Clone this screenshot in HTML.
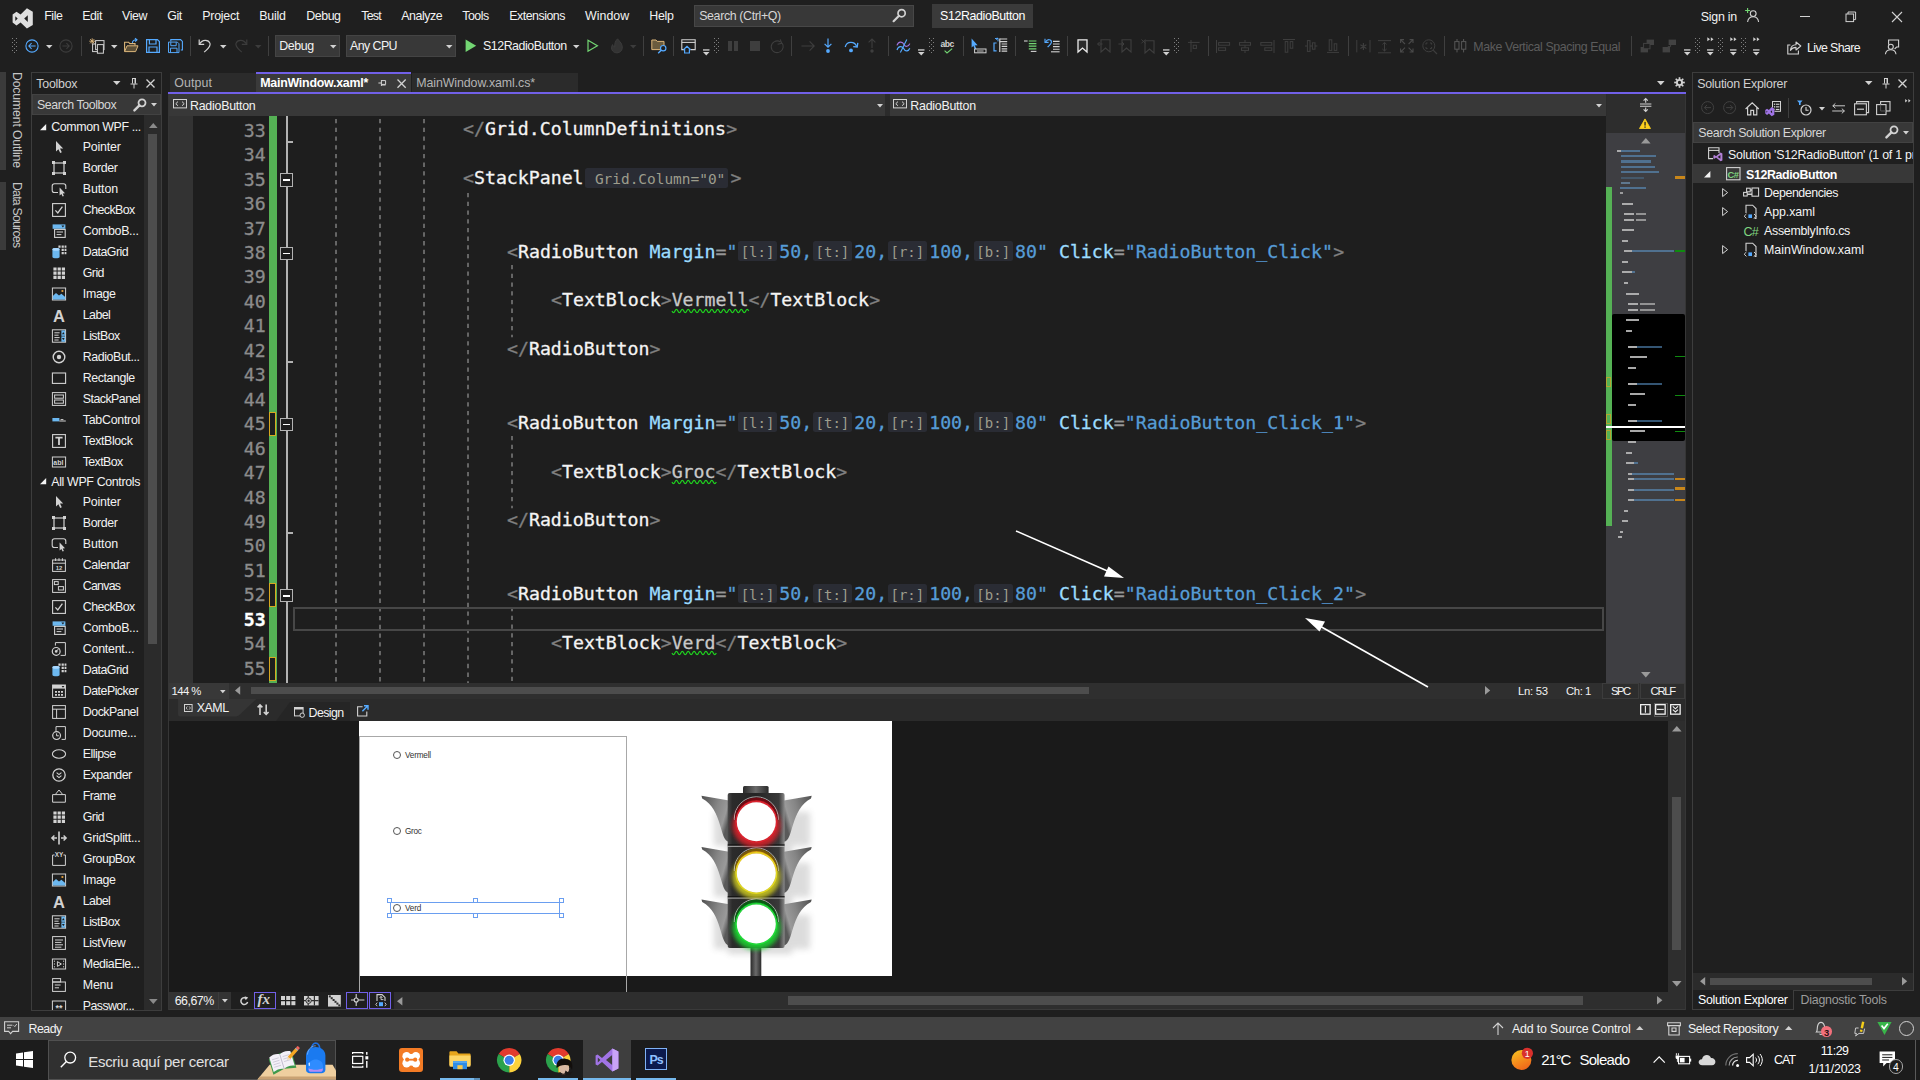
<!DOCTYPE html>
<html><head><meta charset="utf-8"><title>S12RadioButton - Microsoft Visual Studio</title>
<style>
html,body{margin:0;padding:0;background:#1f1f1f;}
body{width:1920px;height:1080px;position:relative;overflow:hidden;font-family:"Liberation Sans",sans-serif;}
.t{position:absolute;white-space:pre;}
.r{position:absolute;box-sizing:border-box;}
svg.r{overflow:visible;}
.c{font-family:"DejaVu Sans Mono","Liberation Mono",monospace;font-size:18.22px;line-height:24.45px;-webkit-text-stroke:0.3px currentColor}
</style></head><body>
<!-- part_top -->
<div class="r" style="left:0px;top:0px;width:1920px;height:66px;background:#1f1f1f;"></div>
<svg class="r" style="left:11.5px;top:7.5px;" width="22" height="21" viewBox="0 0 22 21"><path d="M14.9 0.2 L20.8 3.8 V17.1 L14.9 20.6 L8.6 14.6 L4.5 17.5 L0.6 14.6 V6.5 L4.5 3.7 L8.6 6.6 Z M15.8 7.2 V13.9 L12.2 10.6 Z M3.3 8.2 V12.9 L5.7 10.6 Z" fill="#dedede" fill-rule="evenodd"/></svg>
<span class="t" style="left:44.2px;top:8px;font-size:12.4px;line-height:17px;color:#f2f2f2;letter-spacing:-0.417px;">File</span>
<span class="t" style="left:82.2px;top:8px;font-size:12.4px;line-height:17px;color:#f2f2f2;letter-spacing:-0.390px;">Edit</span>
<span class="t" style="left:122px;top:8px;font-size:12.4px;line-height:17px;color:#f2f2f2;letter-spacing:-0.410px;">View</span>
<span class="t" style="left:167.2px;top:8px;font-size:12.4px;line-height:17px;color:#f2f2f2;letter-spacing:-0.448px;">Git</span>
<span class="t" style="left:202.2px;top:8px;font-size:12.4px;line-height:17px;color:#f2f2f2;letter-spacing:-0.225px;">Project</span>
<span class="t" style="left:259.2px;top:8px;font-size:12.4px;line-height:17px;color:#f2f2f2;letter-spacing:-0.192px;">Build</span>
<span class="t" style="left:306.3px;top:8px;font-size:12.4px;line-height:17px;color:#f2f2f2;letter-spacing:-0.463px;">Debug</span>
<span class="t" style="left:361.3px;top:8px;font-size:12.4px;line-height:17px;color:#f2f2f2;letter-spacing:-0.809px;">Test</span>
<span class="t" style="left:401.2px;top:8px;font-size:12.4px;line-height:17px;color:#f2f2f2;letter-spacing:-0.442px;">Analyze</span>
<span class="t" style="left:462.2px;top:8px;font-size:12.4px;line-height:17px;color:#f2f2f2;letter-spacing:-0.467px;">Tools</span>
<span class="t" style="left:509.2px;top:8px;font-size:12.4px;line-height:17px;color:#f2f2f2;letter-spacing:-0.482px;">Extensions</span>
<span class="t" style="left:585px;top:8px;font-size:12.4px;line-height:17px;color:#f2f2f2;letter-spacing:0.020px;">Window</span>
<span class="t" style="left:649.2px;top:8px;font-size:12.4px;line-height:17px;color:#f2f2f2;letter-spacing:-0.221px;">Help</span>
<div class="r" style="left:694px;top:5px;width:220px;height:22px;background:#383838;border:1px solid #474747;box-sizing:border-box;"></div>
<span class="t" style="left:699.2px;top:8px;font-size:12.4px;line-height:17px;color:#d6d6d6;letter-spacing:-0.367px;">Search (Ctrl+Q)</span>
<svg class="r" style="left:892px;top:8px;" width="15" height="15" viewBox="0 0 15 15"><circle cx="9.6" cy="5.2" r="3.6" fill="none" stroke="#d2d2d2" stroke-width="1.7"/><path d="M7 7.8 L1.6 13.2" stroke="#d2d2d2" stroke-width="2.2" stroke-linecap="round"/></svg>
<div class="r" style="left:932px;top:4px;width:101px;height:24px;background:#3a3a3a;"></div>
<span class="t" style="left:940px;top:8px;font-size:12.4px;line-height:17px;color:#ffffff;letter-spacing:-0.375px;">S12RadioButton</span>
<span class="t" style="left:1700.8px;top:8.8px;font-size:12.4px;line-height:17px;color:#f2f2f2;letter-spacing:-0.242px;">Sign in</span>
<svg class="r" style="left:1744px;top:7px;" width="16" height="16" viewBox="0 0 16 16"><path d="M3.6 1 V6 M1.1 3.5 H6.1" stroke="#73d673" stroke-width="1.1"/><circle cx="9.2" cy="6.6" r="2.9" fill="none" stroke="#d2d2d2" stroke-width="1.1"/><path d="M3.6 15 C4 11.2 6.5 9.8 9.2 9.8 C11.9 9.8 14.2 11.2 14.6 15" fill="none" stroke="#d2d2d2" stroke-width="1.1"/></svg>
<div class="r" style="left:1800px;top:16px;width:10px;height:1px;background:#d2d2d2;"></div>
<svg class="r" style="left:1845px;top:11px;" width="12" height="12" viewBox="0 0 12 12"><rect x="1" y="3" width="7.6" height="7.6" fill="none" stroke="#d2d2d2" stroke-width="1"/><path d="M3 3 V1 H10.6 V8.6 H8.6" fill="none" stroke="#d2d2d2" stroke-width="1"/></svg>
<svg class="r" style="left:1892px;top:12px;" width="10" height="10" viewBox="0 0 10 10"><path d="M0 0 L10 10 M10 0 L0 10" stroke="#d2d2d2" stroke-width="1.1"/></svg>
<svg class="r" style="left:12px;top:38px;shape-rendering:crispEdges;" width="6" height="16" viewBox="0 0 6 16"><rect x="0" y="0" width="1" height="1" fill="#808080"/><rect x="4" y="0" width="1" height="1" fill="#808080"/><rect x="2" y="2" width="1" height="1" fill="#808080"/><rect x="0" y="4" width="1" height="1" fill="#808080"/><rect x="4" y="4" width="1" height="1" fill="#808080"/><rect x="2" y="6" width="1" height="1" fill="#808080"/><rect x="0" y="8" width="1" height="1" fill="#808080"/><rect x="4" y="8" width="1" height="1" fill="#808080"/><rect x="2" y="10" width="1" height="1" fill="#808080"/><rect x="0" y="12" width="1" height="1" fill="#808080"/><rect x="4" y="12" width="1" height="1" fill="#808080"/><rect x="2" y="14" width="1" height="1" fill="#808080"/></svg>
<svg class="r" style="left:24.5px;top:39px;" width="14" height="14" viewBox="0 0 14 14"><circle cx="7" cy="7" r="6.1" fill="none" stroke="#55aaff" stroke-width="1.1"/><path d="M10.6 7 H3.8 M6.6 4.2 L3.8 7 L6.6 9.8" fill="none" stroke="#55aaff" stroke-width="1.05"/></svg>
<svg class="r" style="left:45.95px;top:45.05px;" width="6.5" height="3.5" viewBox="0 0 6.5 3.5"><polygon points="0,0 6.5,0 3.25,3.5" fill="#d2d2d2"/></svg>
<svg class="r" style="left:58.5px;top:39px;" width="14" height="14" viewBox="0 0 14 14"><circle cx="7" cy="7" r="6.1" fill="none" stroke="#3c3c3c" stroke-width="1.1"/><path d="M3.4 7 H10.2 M7.4 4.2 L10.2 7 L7.4 9.8" fill="none" stroke="#3c3c3c" stroke-width="1.05"/></svg>
<div class="r" style="left:80.5px;top:36px;width:1px;height:20px;background:#3f3f3f;"></div>
<svg class="r" style="left:89px;top:38px;" width="17" height="16" viewBox="0 0 17 16"><path d="M3.2 0.3 V6.2 M0.3 3.2 H6.2 M1.1 1.1 L5.3 5.3 M5.3 1.1 L1.1 5.3" stroke="#dcb67a" stroke-width="0.9"/><rect x="3.6" y="6" width="6.6" height="7.6" fill="none" stroke="#d2d2d2" stroke-width="1"/><rect x="6.6" y="2.6" width="8.4" height="9" fill="#1f1f1f" stroke="#d2d2d2" stroke-width="1"/><rect x="8.4" y="6.6" width="6" height="8.6" fill="#1f1f1f" stroke="#d2d2d2" stroke-width="1"/></svg>
<svg class="r" style="left:110.55px;top:45.05px;" width="6.5" height="3.5" viewBox="0 0 6.5 3.5"><polygon points="0,0 6.5,0 3.25,3.5" fill="#d2d2d2"/></svg>
<svg class="r" style="left:123.5px;top:38px;" width="16" height="15" viewBox="0 0 16 15"><path d="M0.6 13.6 V4.2 H4.6 L5.8 5.6 H11 V7.6" fill="none" stroke="#dcb67a" stroke-width="1.1"/><path d="M0.6 13.6 L3 7.8 H14 L11.6 13.6 Z" fill="#5b4e36" stroke="#dcb67a" stroke-width="1"/><path d="M8.4 5 C8.6 2.6 10.4 1.6 12.8 1.8 M11 0.2 L13 1.8 L11.2 3.6" fill="none" stroke="#55aaff" stroke-width="1.1"/></svg>
<svg class="r" style="left:146.3px;top:39px;" width="14" height="14" viewBox="0 0 14 14"><path d="M0.6 0.6 H11.4 L13.4 2.6 V13.4 H0.6 Z" fill="none" stroke="#55aaff" stroke-width="1.2"/><path d="M3.4 0.8 V5 H10 V0.8" fill="none" stroke="#55aaff" stroke-width="1.2"/><path d="M3 13.2 V8 H11 V13.2" fill="none" stroke="#55aaff" stroke-width="1.2"/></svg>
<svg class="r" style="left:167.5px;top:39px;" width="15" height="14" viewBox="0 0 15 14"><path d="M2.8 2.4 V0.6 H12.6 L14.4 2.4 V11 H12.8" fill="none" stroke="#55aaff" stroke-width="1.1"/><g transform="translate(0,2.6) scale(0.82)"><path d="M0.6 0.6 H11.4 L13.4 2.6 V13.4 H0.6 Z" fill="none" stroke="#55aaff" stroke-width="1.2"/><path d="M3.4 0.8 V5 H10 V0.8" fill="none" stroke="#55aaff" stroke-width="1.2"/><path d="M3 13.2 V8 H11 V13.2" fill="none" stroke="#55aaff" stroke-width="1.2"/></g></svg>
<div class="r" style="left:189.5px;top:36px;width:1px;height:20px;background:#3f3f3f;"></div>
<svg class="r" style="left:198px;top:38px;" width="14" height="15" viewBox="0 0 14 15"><path d="M1.2 1.4 V6.4 H6.2" fill="none" stroke="#d2d2d2" stroke-width="1.2"/><path d="M1.6 6 C4.2 1.4 10.4 1.2 12 5.4 C13 8.6 9.6 10.8 6.2 14.2" fill="none" stroke="#d2d2d2" stroke-width="1.2"/></svg>
<svg class="r" style="left:219.75px;top:45.05px;" width="6.5" height="3.5" viewBox="0 0 6.5 3.5"><polygon points="0,0 6.5,0 3.25,3.5" fill="#d2d2d2"/></svg>
<svg class="r" style="left:233.5px;top:38px;" width="14" height="15" viewBox="0 0 14 15"><path d="M12.8 1.4 V6.4 H7.8" fill="none" stroke="#3c3c3c" stroke-width="1.2"/><path d="M12.4 6 C9.8 1.4 3.6 1.2 2 5.4 C1 8.6 4.4 10.8 7.8 14.2" fill="none" stroke="#3c3c3c" stroke-width="1.2"/></svg>
<svg class="r" style="left:254.55px;top:45.05px;" width="6.5" height="3.5" viewBox="0 0 6.5 3.5"><polygon points="0,0 6.5,0 3.25,3.5" fill="#3c3c3c"/></svg>
<div class="r" style="left:267.5px;top:36px;width:1px;height:20px;background:#3f3f3f;"></div>
<div class="r" style="left:275px;top:35px;width:65px;height:22px;background:#383838;border:1px solid #444444;box-sizing:border-box;"></div>
<span class="t" style="left:279.2px;top:38px;font-size:12.4px;line-height:17px;color:#f2f2f2;letter-spacing:-0.403px;">Debug</span>
<svg class="r" style="left:329.75px;top:45.15px;" width="6.5" height="3.5" viewBox="0 0 6.5 3.5"><polygon points="0,0 6.5,0 3.25,3.5" fill="#d2d2d2"/></svg>
<div class="r" style="left:346px;top:35px;width:110px;height:22px;background:#383838;border:1px solid #444444;box-sizing:border-box;"></div>
<span class="t" style="left:350px;top:38px;font-size:12.4px;line-height:17px;color:#f2f2f2;letter-spacing:-0.567px;">Any CPU</span>
<svg class="r" style="left:445.55px;top:45.15px;" width="6.5" height="3.5" viewBox="0 0 6.5 3.5"><polygon points="0,0 6.5,0 3.25,3.5" fill="#d2d2d2"/></svg>
<svg class="r" style="left:465px;top:39px;" width="12" height="14" viewBox="0 0 12 14"><polygon points="0.6,0.4 11.2,6.7 0.6,13" fill="#73d673"/></svg>
<span class="t" style="left:483px;top:38px;font-size:12.4px;line-height:17px;color:#f2f2f2;letter-spacing:-0.468px;">S12RadioButton</span>
<svg class="r" style="left:572.75px;top:45.15px;" width="6.5" height="3.5" viewBox="0 0 6.5 3.5"><polygon points="0,0 6.5,0 3.25,3.5" fill="#d2d2d2"/></svg>
<svg class="r" style="left:587px;top:39px;" width="12" height="14" viewBox="0 0 12 14"><polygon points="1,1.2 10.4,6.7 1,12.2" fill="none" stroke="#73d673" stroke-width="1.2"/></svg>
<svg class="r" style="left:610px;top:38px;" width="14" height="16" viewBox="0 0 14 16"><path d="M7.6 0.8 C9.6 3.6 12.8 6 12.2 10.4 C11.6 14.2 7.6 15.6 4.6 14.4 C1.4 13 0.8 9.4 2.6 6.6 C3 8.2 3.8 8.8 4.8 9 C4.4 5.6 5.4 2.8 7.6 0.8 Z" fill="#333" stroke="#3c3c3c" stroke-width="1"/></svg>
<svg class="r" style="left:629.55px;top:45.15px;" width="6.5" height="3.5" viewBox="0 0 6.5 3.5"><polygon points="0,0 6.5,0 3.25,3.5" fill="#3c3c3c"/></svg>
<div class="r" style="left:642.5px;top:36px;width:1px;height:20px;background:#3f3f3f;"></div>
<svg class="r" style="left:650.5px;top:39px;" width="17" height="15" viewBox="0 0 17 15"><path d="M0.8 10.6 V1 H5 L6.2 2.4 H13 V10.6 Z" fill="#6b5c3e" stroke="#dcb67a" stroke-width="1"/><circle cx="12.2" cy="9.2" r="2.7" fill="#1f1f1f" stroke="#55aaff" stroke-width="1.2"/><path d="M10.2 11.2 L7.2 14.2" stroke="#55aaff" stroke-width="1.4"/></svg>
<div class="r" style="left:672.5px;top:36px;width:1px;height:20px;background:#3f3f3f;"></div>
<svg class="r" style="left:680.5px;top:39px;" width="16" height="15" viewBox="0 0 16 15"><path d="M3 10.6 H0.8 V0.8 H14.2 V10.6 H9.4" fill="none" stroke="#d2d2d2" stroke-width="1.1"/><path d="M0.8 3.4 H14.2" stroke="#d2d2d2" stroke-width="1.1"/><path d="M2.4 10.8 L6 7.4 L9.6 10.8 M3.6 10 V14 H8.4 V10" fill="none" stroke="#55aaff" stroke-width="1.2"/></svg>
<svg class="r" style="left:702.8px;top:48.5px;" width="6.5" height="7" viewBox="0 0 6.5 7"><rect x="0" y="0.3" width="6.5" height="1.3" fill="#d2d2d2"/><polygon points="0,3 6.5,3 3.25,6.5" fill="#d2d2d2"/></svg>
<svg class="r" style="left:714px;top:38px;shape-rendering:crispEdges;" width="6" height="16" viewBox="0 0 6 16"><rect x="0" y="0" width="1" height="1" fill="#808080"/><rect x="4" y="0" width="1" height="1" fill="#808080"/><rect x="2" y="2" width="1" height="1" fill="#808080"/><rect x="0" y="4" width="1" height="1" fill="#808080"/><rect x="4" y="4" width="1" height="1" fill="#808080"/><rect x="2" y="6" width="1" height="1" fill="#808080"/><rect x="0" y="8" width="1" height="1" fill="#808080"/><rect x="4" y="8" width="1" height="1" fill="#808080"/><rect x="2" y="10" width="1" height="1" fill="#808080"/><rect x="0" y="12" width="1" height="1" fill="#808080"/><rect x="4" y="12" width="1" height="1" fill="#808080"/><rect x="2" y="14" width="1" height="1" fill="#808080"/></svg>
<div class="r" style="left:728px;top:41px;width:3.6px;height:10px;background:#3e3e3e;"></div>
<div class="r" style="left:734.4px;top:41px;width:3.6px;height:10px;background:#3e3e3e;"></div>
<div class="r" style="left:750px;top:41px;width:10px;height:10px;background:#3e3e3e;"></div>
<svg class="r" style="left:770px;top:38.5px;" width="15" height="15" viewBox="0 0 15 15"><path d="M10.6 3 C6.6 0.4 1.4 3 1.2 7.8 C1.2 12.6 6.4 15 10.4 12.6 C13.6 10.4 13.8 6.6 12.2 4.2" fill="none" stroke="#3e3e3e" stroke-width="1.1"/><path d="M10.2 0.4 L11.8 4.4 L7.6 5.2" fill="none" stroke="#3e3e3e" stroke-width="1.1"/></svg>
<div class="r" style="left:791.3px;top:36px;width:1px;height:20px;background:#3f3f3f;"></div>
<svg class="r" style="left:800.5px;top:40px;" width="14" height="12" viewBox="0 0 14 12"><path d="M0.4 6 H13 M8.6 1.4 L13.2 6 L8.6 10.6" fill="none" stroke="#3e3e3e" stroke-width="1.1"/></svg>
<svg class="r" style="left:823px;top:37.5px;" width="10" height="16" viewBox="0 0 10 16"><path d="M5 0.6 V9 M1.6 5.8 L5 9.2 L8.4 5.8" fill="none" stroke="#55aaff" stroke-width="1.2"/><circle cx="5" cy="13" r="1.9" fill="#55aaff"/></svg>
<svg class="r" style="left:843.5px;top:39px;" width="15" height="14" viewBox="0 0 15 14"><path d="M1.2 8 C2.8 2 10.6 2 12.6 7.4" fill="none" stroke="#55aaff" stroke-width="1.3"/><path d="M9.2 7.6 L13.2 8 L13.8 3.8" fill="none" stroke="#55aaff" stroke-width="1.3"/><circle cx="7" cy="11.4" r="1.9" fill="#55aaff"/></svg>
<svg class="r" style="left:867px;top:37.5px;" width="10" height="16" viewBox="0 0 10 16"><path d="M5 10 V1 M1.6 4.4 L5 1 L8.4 4.4" fill="none" stroke="#3e3e3e" stroke-width="1.1"/><circle cx="5" cy="13" r="1.7" fill="#3e3e3e"/></svg>
<div class="r" style="left:887.5px;top:36px;width:1px;height:20px;background:#3f3f3f;"></div>
<svg class="r" style="left:895.5px;top:39px;" width="15" height="14" viewBox="0 0 15 14"><path d="M1 6.4 C2.4 2.2 6.4 2 8 5.4 C9.4 8.4 12.6 7.6 13.8 4.6" fill="none" stroke="#a074e0" stroke-width="1.2"/><path d="M1 11 C2.4 6.8 6.4 6.6 8 10 C9.4 13 12.6 12.2 13.8 9.2" fill="none" stroke="#55aaff" stroke-width="1.2"/><path d="M4.4 13.6 L10.8 0.6" stroke="#55aaff" stroke-width="1.1"/></svg>
<svg class="r" style="left:918px;top:48.5px;" width="6.5" height="7" viewBox="0 0 6.5 7"><rect x="0" y="0.3" width="6.5" height="1.3" fill="#d2d2d2"/><polygon points="0,3 6.5,3 3.25,6.5" fill="#d2d2d2"/></svg>
<svg class="r" style="left:929px;top:38px;shape-rendering:crispEdges;" width="6" height="16" viewBox="0 0 6 16"><rect x="0" y="0" width="1" height="1" fill="#808080"/><rect x="4" y="0" width="1" height="1" fill="#808080"/><rect x="2" y="2" width="1" height="1" fill="#808080"/><rect x="0" y="4" width="1" height="1" fill="#808080"/><rect x="4" y="4" width="1" height="1" fill="#808080"/><rect x="2" y="6" width="1" height="1" fill="#808080"/><rect x="0" y="8" width="1" height="1" fill="#808080"/><rect x="4" y="8" width="1" height="1" fill="#808080"/><rect x="2" y="10" width="1" height="1" fill="#808080"/><rect x="0" y="12" width="1" height="1" fill="#808080"/><rect x="4" y="12" width="1" height="1" fill="#808080"/><rect x="2" y="14" width="1" height="1" fill="#808080"/></svg>
<span class="t" style="left:940.4px;top:38.1px;font-size:8.6px;line-height:12px;color:#d2d2d2;font-weight:700;letter-spacing:-0.404px;">abc</span>
<svg class="r" style="left:944px;top:47.5px;" width="9" height="6" viewBox="0 0 9 6"><path d="M0.6 2.6 L3 5 L8.2 0.6" fill="none" stroke="#73d673" stroke-width="1.1"/></svg>
<div class="r" style="left:962.5px;top:36px;width:1px;height:20px;background:#3f3f3f;"></div>
<svg class="r" style="left:970.5px;top:38px;" width="16" height="16" viewBox="0 0 16 16"><polygon points="0.6,0.4 0.6,9.4 2.8,7.4 6.6,7.2" fill="#55aaff"/><path d="M2.8 7 L4.6 11" stroke="#55aaff" stroke-width="1.6"/><rect x="3.6" y="11" width="11.4" height="3.8" fill="none" stroke="#d2d2d2" stroke-width="1"/><path d="M6 13 H12.6" stroke="#d2d2d2" stroke-width="0.9"/></svg>
<svg class="r" style="left:992.5px;top:38px;" width="16" height="16" viewBox="0 0 16 16"><path d="M3.6 5 H1 V12.8 H3.6" fill="none" stroke="#55aaff" stroke-width="1.2"/><path d="M3 1.6 L5 0.2 M5 0.2 L5 3.4 M5 0.2 L2 0.6" stroke="#55aaff" stroke-width="1"/><path d="M6.8 1 H14.2 M6.8 3.6 H14.2 M8.6 6 H14.2 M8.6 8.4 H14.2 M8.6 10.8 H14.2 M8.6 13.2 H14.2" stroke="#d2d2d2" stroke-width="1.2"/><path d="M6.8 0.6 V14" stroke="#d2d2d2" stroke-width="1.2"/></svg>
<div class="r" style="left:1014.5px;top:36px;width:1px;height:20px;background:#3f3f3f;"></div>
<svg class="r" style="left:1024px;top:40px;" width="13" height="12" viewBox="0 0 13 12"><path d="M0 1 H3.6" stroke="#d2d2d2" stroke-width="1.1"/><path d="M4.8 1 H12.4 M4.8 3.6 H12.4 M4.8 6.2 H12.4 M4.8 8.8 H12.4" stroke="#73d673" stroke-width="1.2"/><path d="M6.8 11.4 H12.4" stroke="#d2d2d2" stroke-width="1.1"/></svg>
<svg class="r" style="left:1043.5px;top:38px;" width="17" height="15" viewBox="0 0 17 15"><path d="M1 0.8 V4.4 H4.6" fill="none" stroke="#55aaff" stroke-width="1.1"/><path d="M1.6 4 C3.4 0.6 7.8 1.2 7.4 4.4 C7 6.4 5 7.6 3.6 9.2" fill="none" stroke="#55aaff" stroke-width="1.2"/><path d="M9 3.4 H15.6 M9 6 H15.6 M9 8.6 H15.6 M9 11.2 H15.6" stroke="#d2d2d2" stroke-width="1.1"/><path d="M7 13.8 H15.6" stroke="#d2d2d2" stroke-width="1.1"/></svg>
<div class="r" style="left:1066.5px;top:36px;width:1px;height:20px;background:#3f3f3f;"></div>
<svg class="r" style="left:1076.5px;top:39px;" width="11" height="14" viewBox="0 0 11 14"><path d="M1 0.8 H10 V13 L5.5 9 L1 13 Z" fill="#2a2a2a" stroke="#ebebeb" stroke-width="1.3"/></svg>
<svg class="r" style="left:1097px;top:39px;" width="14" height="14" viewBox="0 0 14 14"><g transform="translate(3,0)"><path d="M1 0.8 H10 V13 L5.5 9 L1 13 Z" fill="none" stroke="#3e3e3e" stroke-width="1.1"/></g><path d="M5.6 5 H0.6 M2.6 3 L0.6 5 L2.6 7" fill="none" stroke="#3e3e3e" stroke-width="1"/></svg>
<svg class="r" style="left:1118px;top:39px;" width="14" height="14" viewBox="0 0 14 14"><g transform="translate(3,0)"><path d="M1 0.8 H10 V13 L5.5 9 L1 13 Z" fill="none" stroke="#3e3e3e" stroke-width="1.1"/></g><path d="M0.4 5 H6 M4 3 L6 5 L4 7" fill="none" stroke="#3e3e3e" stroke-width="1"/></svg>
<svg class="r" style="left:1140.5px;top:38.5px;" width="14" height="15" viewBox="0 0 14 15"><g transform="translate(3,1)"><path d="M1 0.8 H10 V13 L5.5 9 L1 13 Z" fill="none" stroke="#3e3e3e" stroke-width="1.1"/></g><path d="M0.4 0.4 L4.4 4.4 M4.4 0.4 L0.4 4.4" stroke="#3e3e3e" stroke-width="0.9"/></svg>
<svg class="r" style="left:1162.8px;top:48.5px;" width="6.5" height="7" viewBox="0 0 6.5 7"><rect x="0" y="0.3" width="6.5" height="1.3" fill="#d2d2d2"/><polygon points="0,3 6.5,3 3.25,6.5" fill="#d2d2d2"/></svg>
<svg class="r" style="left:1174px;top:38px;shape-rendering:crispEdges;" width="6" height="16" viewBox="0 0 6 16"><rect x="0" y="0" width="1" height="1" fill="#808080"/><rect x="4" y="0" width="1" height="1" fill="#808080"/><rect x="2" y="2" width="1" height="1" fill="#808080"/><rect x="0" y="4" width="1" height="1" fill="#808080"/><rect x="4" y="4" width="1" height="1" fill="#808080"/><rect x="2" y="6" width="1" height="1" fill="#808080"/><rect x="0" y="8" width="1" height="1" fill="#808080"/><rect x="4" y="8" width="1" height="1" fill="#808080"/><rect x="2" y="10" width="1" height="1" fill="#808080"/><rect x="0" y="12" width="1" height="1" fill="#808080"/><rect x="4" y="12" width="1" height="1" fill="#808080"/><rect x="2" y="14" width="1" height="1" fill="#808080"/></svg>
<svg class="r" style="left:1187.5px;top:39.5px;" width="12" height="13" viewBox="0 0 12 13"><path d="M0 2.4 H11.6 M3 0 V12" stroke="#3e3e3e" stroke-width="1"/><rect x="5.2" y="5.2" width="3.2" height="3.2" fill="none" stroke="#3e3e3e" stroke-width="1"/></svg>
<div class="r" style="left:1207.5px;top:36px;width:1px;height:20px;background:#3f3f3f;"></div>
<svg class="r" style="left:1216px;top:39.5px;" width="15" height="13" viewBox="0 0 15 13"><path d="M0.5 0 V13" stroke="#3e3e3e" stroke-width="1"/><rect x="2.6" y="2.6" width="11" height="2.6" fill="none" stroke="#3e3e3e"/><rect x="2.6" y="7.8" width="7" height="2.6" fill="none" stroke="#3e3e3e"/></svg>
<svg class="r" style="left:1238.5px;top:39.5px;" width="12" height="13" viewBox="0 0 12 13"><path d="M6 0 V13" stroke="#3e3e3e" stroke-width="1"/><rect x="0.5" y="2.6" width="11" height="2.6" fill="#1f1f1f" stroke="#3e3e3e"/><rect x="2.5" y="7.8" width="7" height="2.6" fill="#1f1f1f" stroke="#3e3e3e"/></svg>
<svg class="r" style="left:1260px;top:39.5px;" width="15" height="13" viewBox="0 0 15 13"><path d="M14 0 V13" stroke="#3e3e3e" stroke-width="1"/><rect x="0.8" y="2.6" width="11" height="2.6" fill="none" stroke="#3e3e3e"/><rect x="4.8" y="7.8" width="7" height="2.6" fill="none" stroke="#3e3e3e"/></svg>
<svg class="r" style="left:1283px;top:39px;" width="13" height="14" viewBox="0 0 13 14"><path d="M0 0.5 H12" stroke="#3e3e3e"/><rect x="2.2" y="2.6" width="2.6" height="10.6" fill="none" stroke="#3e3e3e"/><rect x="7.2" y="2.6" width="2.6" height="6.6" fill="none" stroke="#3e3e3e"/></svg>
<svg class="r" style="left:1305px;top:39px;" width="13" height="14" viewBox="0 0 13 14"><path d="M0 7 H12.4" stroke="#3e3e3e"/><rect x="2.4" y="1.6" width="2.6" height="10.8" fill="#1f1f1f" stroke="#3e3e3e"/><rect x="7.4" y="3.8" width="2.6" height="6.4" fill="#1f1f1f" stroke="#3e3e3e"/></svg>
<svg class="r" style="left:1327px;top:39px;" width="13" height="14" viewBox="0 0 13 14"><path d="M0 13.4 H12" stroke="#3e3e3e"/><rect x="2.2" y="0.8" width="2.6" height="10.6" fill="none" stroke="#3e3e3e"/><rect x="7.2" y="4.8" width="2.6" height="6.6" fill="none" stroke="#3e3e3e"/></svg>
<div class="r" style="left:1347.5px;top:36px;width:1px;height:20px;background:#3f3f3f;"></div>
<svg class="r" style="left:1355.5px;top:39.5px;" width="15" height="13" viewBox="0 0 15 13"><path d="M0.8 0 V12.4 M14 0 V12.4" stroke="#3e3e3e"/><path d="M7.4 3 V10 M4.4 4.8 L10.4 8.4 M10.4 4.8 L4.4 8.4" stroke="#3e3e3e" stroke-width="1.2"/></svg>
<svg class="r" style="left:1378px;top:39.5px;" width="14" height="14" viewBox="0 0 14 14"><path d="M0 0.6 H13 M0 12.8 H13" stroke="#3e3e3e"/><path d="M6.5 2.4 V11 M4.4 4.4 L6.5 2.4 L8.6 4.4 M4.4 9 L6.5 11 L8.6 9" fill="none" stroke="#3e3e3e"/></svg>
<svg class="r" style="left:1400px;top:39px;" width="14" height="14" viewBox="0 0 14 14"><path d="M0.6 4 V0.6 H4 M9.6 0.6 H13 V4 M13 9.6 V13 H9.6 M4 13 H0.6 V9.6 M0.8 0.8 L5 5 M12.8 0.8 L8.6 5 M12.8 12.8 L8.6 8.6 M0.8 12.8 L5 8.6" fill="none" stroke="#4a4a4a" stroke-width="1.1"/></svg>
<svg class="r" style="left:1421.5px;top:39px;" width="16" height="16" viewBox="0 0 16 16"><circle cx="6.8" cy="6.8" r="6" fill="none" stroke="#3e3e3e"/><path d="M11.2 11.2 L15 15" stroke="#3e3e3e" stroke-width="1.2"/><path d="M4 5.6 V4 H5.6 M8 4 H9.6 V5.6 M9.6 8 V9.6 H8 M5.6 9.6 H4 V8" fill="none" stroke="#3e3e3e"/></svg>
<div class="r" style="left:1443.5px;top:36px;width:1px;height:20px;background:#3f3f3f;"></div>
<svg class="r" style="left:1453.5px;top:39px;" width="13" height="14" viewBox="0 0 13 14"><path d="M3 0 V13.4 M9.6 0 V13.4" stroke="#585858"/><rect x="0.8" y="2.6" width="4.2" height="7.6" fill="#1f1f1f" stroke="#585858"/><rect x="7.6" y="2.6" width="4.2" height="7.6" fill="#1f1f1f" stroke="#585858"/></svg>
<span class="t" style="left:1473.3px;top:39px;font-size:12.4px;line-height:17px;color:#5c5c5c;letter-spacing:-0.409px;">Make Vertical Spacing Equal</span>
<div class="r" style="left:1631.3px;top:36px;width:1px;height:20px;background:#3f3f3f;"></div>
<svg class="r" style="left:1640px;top:39px;" width="15" height="15" viewBox="0 0 15 15"><rect x="6.6" y="0.6" width="7.4" height="5.4" fill="#424242"/><rect x="0.6" y="8" width="7.4" height="5.4" fill="#424242"/><rect x="3.6" y="4.4" width="6.4" height="5.4" fill="#1f1f1f" stroke="#424242"/></svg>
<svg class="r" style="left:1662px;top:39px;" width="15" height="15" viewBox="0 0 15 15"><rect x="6.6" y="0.6" width="7.4" height="5.4" fill="#424242"/><rect x="0.6" y="8" width="7.4" height="5.4" fill="#424242"/><path d="M8.6 6 V7.6 H6 V9" fill="none" stroke="#424242"/></svg>
<svg class="r" style="left:1684px;top:48.5px;" width="6.5" height="7" viewBox="0 0 6.5 7"><rect x="0" y="0.3" width="6.5" height="1.3" fill="#d2d2d2"/><polygon points="0,3 6.5,3 3.25,6.5" fill="#d2d2d2"/></svg>
<svg class="r" style="left:1695px;top:38px;shape-rendering:crispEdges;" width="6" height="16" viewBox="0 0 6 16"><rect x="0" y="0" width="1" height="1" fill="#808080"/><rect x="4" y="0" width="1" height="1" fill="#808080"/><rect x="2" y="2" width="1" height="1" fill="#808080"/><rect x="0" y="4" width="1" height="1" fill="#808080"/><rect x="4" y="4" width="1" height="1" fill="#808080"/><rect x="2" y="6" width="1" height="1" fill="#808080"/><rect x="0" y="8" width="1" height="1" fill="#808080"/><rect x="4" y="8" width="1" height="1" fill="#808080"/><rect x="2" y="10" width="1" height="1" fill="#808080"/><rect x="0" y="12" width="1" height="1" fill="#808080"/><rect x="4" y="12" width="1" height="1" fill="#808080"/><rect x="2" y="14" width="1" height="1" fill="#808080"/></svg>
<svg class="r" style="left:1706.5px;top:37px;" width="7" height="5" viewBox="0 0 7 5"><polygon points="0.3,0.3 3,2.2 0.3,4.2" fill="#d2d2d2"/><polygon points="3.8,0.3 6.5,2.2 3.8,4.2" fill="#d2d2d2"/></svg>
<svg class="r" style="left:1706.8px;top:48.5px;" width="6.5" height="7" viewBox="0 0 6.5 7"><rect x="0" y="0.3" width="6.5" height="1.3" fill="#d2d2d2"/><polygon points="0,3 6.5,3 3.25,6.5" fill="#d2d2d2"/></svg>
<svg class="r" style="left:1718px;top:38px;shape-rendering:crispEdges;" width="6" height="16" viewBox="0 0 6 16"><rect x="0" y="0" width="1" height="1" fill="#808080"/><rect x="4" y="0" width="1" height="1" fill="#808080"/><rect x="2" y="2" width="1" height="1" fill="#808080"/><rect x="0" y="4" width="1" height="1" fill="#808080"/><rect x="4" y="4" width="1" height="1" fill="#808080"/><rect x="2" y="6" width="1" height="1" fill="#808080"/><rect x="0" y="8" width="1" height="1" fill="#808080"/><rect x="4" y="8" width="1" height="1" fill="#808080"/><rect x="2" y="10" width="1" height="1" fill="#808080"/><rect x="0" y="12" width="1" height="1" fill="#808080"/><rect x="4" y="12" width="1" height="1" fill="#808080"/><rect x="2" y="14" width="1" height="1" fill="#808080"/></svg>
<svg class="r" style="left:1729.5px;top:37px;" width="7" height="5" viewBox="0 0 7 5"><polygon points="0.3,0.3 3,2.2 0.3,4.2" fill="#d2d2d2"/><polygon points="3.8,0.3 6.5,2.2 3.8,4.2" fill="#d2d2d2"/></svg>
<svg class="r" style="left:1729.8px;top:48.5px;" width="6.5" height="7" viewBox="0 0 6.5 7"><rect x="0" y="0.3" width="6.5" height="1.3" fill="#d2d2d2"/><polygon points="0,3 6.5,3 3.25,6.5" fill="#d2d2d2"/></svg>
<svg class="r" style="left:1741px;top:38px;shape-rendering:crispEdges;" width="6" height="16" viewBox="0 0 6 16"><rect x="0" y="0" width="1" height="1" fill="#808080"/><rect x="4" y="0" width="1" height="1" fill="#808080"/><rect x="2" y="2" width="1" height="1" fill="#808080"/><rect x="0" y="4" width="1" height="1" fill="#808080"/><rect x="4" y="4" width="1" height="1" fill="#808080"/><rect x="2" y="6" width="1" height="1" fill="#808080"/><rect x="0" y="8" width="1" height="1" fill="#808080"/><rect x="4" y="8" width="1" height="1" fill="#808080"/><rect x="2" y="10" width="1" height="1" fill="#808080"/><rect x="0" y="12" width="1" height="1" fill="#808080"/><rect x="4" y="12" width="1" height="1" fill="#808080"/><rect x="2" y="14" width="1" height="1" fill="#808080"/></svg>
<svg class="r" style="left:1752.5px;top:37px;" width="7" height="5" viewBox="0 0 7 5"><polygon points="0.3,0.3 3,2.2 0.3,4.2" fill="#d2d2d2"/><polygon points="3.8,0.3 6.5,2.2 3.8,4.2" fill="#d2d2d2"/></svg>
<svg class="r" style="left:1752.8px;top:48.5px;" width="6.5" height="7" viewBox="0 0 6.5 7"><rect x="0" y="0.3" width="6.5" height="1.3" fill="#d2d2d2"/><polygon points="0,3 6.5,3 3.25,6.5" fill="#d2d2d2"/></svg>
<svg class="r" style="left:1786.5px;top:40px;" width="15" height="15" viewBox="0 0 15 15"><path d="M3.4 5 H0.8 V14 H11.4 V10.6" fill="none" stroke="#d2d2d2" stroke-width="1.1"/><path d="M3.4 10.4 C3.8 6.4 6.2 4.8 9 4.8 V2 L13.8 6 L9 10 V7.4 C6.6 7.4 4.8 8.2 3.4 10.4 Z" fill="none" stroke="#d2d2d2" stroke-width="1.1" stroke-linejoin="round"/></svg>
<span class="t" style="left:1807px;top:39.8px;font-size:12.4px;line-height:17px;color:#f2f2f2;letter-spacing:-0.625px;">Live Share</span>
<svg class="r" style="left:1884px;top:38.5px;" width="16" height="16" viewBox="0 0 16 16"><path d="M4.6 5.8 V1 H14.6 V8 H12.6 L10.6 10" fill="none" stroke="#d2d2d2" stroke-width="1.1"/><circle cx="6.8" cy="7.8" r="2.5" fill="#1f1f1f" stroke="#d2d2d2" stroke-width="1.1"/><path d="M1.4 15.2 C1.8 11.8 4.4 10.8 6.8 10.8 C9.2 10.8 11.6 11.8 12 15.2" fill="none" stroke="#d2d2d2" stroke-width="1.1"/></svg>
<!-- part_left -->
<div class="r" style="left:0px;top:72px;width:5.8px;height:98px;background:#3b3b3b;"></div>
<div class="r" style="left:0px;top:182px;width:5.8px;height:68px;background:#3b3b3b;"></div>
<span class="t" style="left:24.6px;top:71.6px;font-size:12.2px;line-height:17px;color:#c6c6c6;transform-origin:0 0;transform:rotate(90deg);letter-spacing:-0.105px;">Document Outline</span>
<span class="t" style="left:24.6px;top:182.4px;font-size:12.2px;line-height:17px;color:#c6c6c6;transform-origin:0 0;transform:rotate(90deg);letter-spacing:-0.715px;">Data Sources</span>
<div class="r" style="left:31px;top:72px;width:131px;height:938.6px;background:#1f1f1f;border:1px solid #3d3d3d;"></div>
<span class="t" style="left:36.3px;top:75.8px;font-size:12.4px;line-height:17px;color:#d0d0d0;letter-spacing:-0.246px;">Toolbox</span>
<svg class="r" style="left:112.95px;top:81px;" width="7.5" height="4" viewBox="0 0 7.5 4"><polygon points="0,0 7.5,0 3.75,4" fill="#d2d2d2"/></svg>
<svg class="r" style="left:129.8px;top:78px;" width="8" height="11" viewBox="0 0 8 11"><path d="M2 0.5 H6 M2.5 0.5 V5.5 M5.5 0.5 V5.5 M5 0.5 V5.5 M0.5 6 H7.5 M4 6 V10.5" fill="none" stroke="#d2d2d2" stroke-width="1"/></svg>
<svg class="r" style="left:145.5px;top:78.8px;" width="9" height="9" viewBox="0 0 9 9"><path d="M0.5 0.5 L8.5 8.5 M8.5 0.5 L0.5 8.5" stroke="#d2d2d2" stroke-width="1.3"/></svg>
<div class="r" style="left:32px;top:94.3px;width:129px;height:20.6px;background:#383838;border:1px solid #424242;"></div>
<span class="t" style="left:37px;top:97.1px;font-size:12.4px;line-height:17px;color:#d6d6d6;letter-spacing:-0.428px;">Search Toolbox</span>
<svg class="r" style="left:132.8px;top:97.5px;" width="14" height="14" viewBox="0 0 14 14"><circle cx="9" cy="4.8" r="3.5" fill="none" stroke="#d2d2d2" stroke-width="1.8"/><path d="M6.4 7.4 L1.4 12.4" stroke="#d2d2d2" stroke-width="2.4" stroke-linecap="round"/></svg>
<svg class="r" style="left:150.8px;top:102.9px;" width="6" height="3.4" viewBox="0 0 6 3.4"><polygon points="0,0 6,0 3,3.4" fill="#d2d2d2"/></svg>
<div class="r" style="left:143.7px;top:115px;width:17.3px;height:894.6px;background:#2b2b2b;"></div>
<div class="r" style="left:148px;top:134px;width:9px;height:510px;background:#4d4d4d;"></div>
<svg class="r" style="left:148.5px;top:122.5px;" width="8.6" height="5" viewBox="0 0 8.6 5"><polygon points="0,5 4.3,0 8.6,5" fill="#8a8a8a"/></svg>
<svg class="r" style="left:148.5px;top:998.5px;" width="8.6" height="5" viewBox="0 0 8.6 5"><polygon points="0,0 4.3,5 8.6,0" fill="#8a8a8a"/></svg>
<svg class="r" style="left:40px;top:123.8px;" width="6.4" height="6.4" viewBox="0 0 6.4 6.4"><polygon points="6.2,0 6.2,6.2 0,6.2" fill="#f2f2f2"/></svg>
<span class="t" style="left:51.3px;top:119.4px;font-size:12.4px;line-height:17px;color:#f2f2f2;letter-spacing:-0.394px;">Common WPF ...</span>
<svg class="r" style="left:51px;top:138.6px;" width="16" height="16" viewBox="0 0 16 16"><polygon points="5,2 5,12.4 7.4,10.2 9.2,14 10.8,13.2 9,9.6 12.2,9.4" fill="#d2d2d2"/></svg>
<span class="t" style="left:82.8px;top:139px;font-size:12.4px;line-height:17px;color:#f2f2f2;letter-spacing:-0.212px;">Pointer</span>
<svg class="r" style="left:51px;top:159.6px;" width="16" height="16" viewBox="0 0 16 16"><rect x="3" y="3" width="10" height="10" fill="none" stroke="#d2d2d2" stroke-width="1.2"/><path d="M1 1 H4 V4 H1 Z M12 1 H15 V4 H12 Z M1 12 H4 V15 H1 Z M12 12 H15 V15 H12 Z" fill="#d2d2d2"/></svg>
<span class="t" style="left:82.8px;top:160px;font-size:12.4px;line-height:17px;color:#f2f2f2;letter-spacing:-0.428px;">Border</span>
<svg class="r" style="left:51px;top:180.6px;" width="16" height="16" viewBox="0 0 16 16"><path d="M7 11.5 H3.5 C2 11.5 1.2 10.6 1.2 9.2 V5 C1.2 3.6 2 2.7 3.5 2.7 H12.5 C14 2.7 14.8 3.6 14.8 5 V8" fill="none" stroke="#d2d2d2" stroke-width="1.1"/><polygon points="8.6,6.4 8.6,14.6 10.4,13 11.6,15.6 12.9,15 11.7,12.5 14,12.3" fill="#d2d2d2"/></svg>
<span class="t" style="left:82.8px;top:181px;font-size:12.4px;line-height:17px;color:#f2f2f2;letter-spacing:-0.094px;">Button</span>
<svg class="r" style="left:51px;top:201.6px;" width="16" height="16" viewBox="0 0 16 16"><rect x="1.6" y="1.6" width="12.8" height="12.8" fill="none" stroke="#d2d2d2" stroke-width="1.1"/><path d="M4.4 8.4 L6.8 11 L11.4 4.6" fill="none" stroke="#d2d2d2" stroke-width="1.3"/></svg>
<span class="t" style="left:82.8px;top:202px;font-size:12.4px;line-height:17px;color:#f2f2f2;letter-spacing:-0.567px;">CheckBox</span>
<svg class="r" style="left:51px;top:222.6px;" width="16" height="16" viewBox="0 0 16 16"><rect x="1.6" y="1.4" width="12.8" height="4.4" fill="#6cb8f0"/><polygon points="10.4,2.6 13.4,2.6 11.9,4.6" fill="#1f1f1f"/><rect x="3.6" y="6.4" width="10.6" height="8" fill="none" stroke="#d2d2d2" stroke-width="1.1"/><path d="M5.6 9 H12 M5.6 11.6 H10.4" stroke="#d2d2d2" stroke-width="1"/></svg>
<span class="t" style="left:82.8px;top:223px;font-size:12.4px;line-height:17px;color:#f2f2f2;letter-spacing:-0.314px;">ComboB...</span>
<svg class="r" style="left:51px;top:243.6px;" width="16" height="16" viewBox="0 0 16 16"><path d="M7.4 1.6 h2.2 v2.2 h-2.2z M10.6 1.6 h2.2 v2.2 h-2.2z M13.6 1.6 h1.8 v2.2 h-1.8z M10.6 4.8 h2.2 v2.2 h-2.2z M13.6 4.8 h1.8 v2.2 h-1.8z M10.6 8 h2.2 v2.2 h-2.2z M13.6 8 h1.8 v2.2 h-1.8z" fill="#d2d2d2"/><path d="M1.4 5.4 C1.4 3.6 8.6 3.6 8.6 5.4 V13 C8.6 14.8 1.4 14.8 1.4 13 Z" fill="#6cb8f0"/><ellipse cx="5" cy="5.4" rx="3.6" ry="1.3" fill="#a9d8ff"/></svg>
<span class="t" style="left:82.8px;top:244px;font-size:12.4px;line-height:17px;color:#f2f2f2;letter-spacing:-0.532px;">DataGrid</span>
<svg class="r" style="left:51px;top:264.6px;" width="16" height="16" viewBox="0 0 16 16"><path d="M2.4 2.4 h3.2 v3.2 h-3.2z M2.4 6.6 h3.2 v3.2 h-3.2z M2.4 10.8 h3.2 v3.2 h-3.2z M6.6 2.4 h3.2 v3.2 h-3.2z M6.6 6.6 h3.2 v3.2 h-3.2z M6.6 10.8 h3.2 v3.2 h-3.2z M10.8 2.4 h3.2 v3.2 h-3.2z M10.8 6.6 h3.2 v3.2 h-3.2z M10.8 10.8 h3.2 v3.2 h-3.2z " fill="#d2d2d2"/></svg>
<span class="t" style="left:82.8px;top:265px;font-size:12.4px;line-height:17px;color:#f2f2f2;letter-spacing:-0.580px;">Grid</span>
<svg class="r" style="left:51px;top:285.6px;" width="16" height="16" viewBox="0 0 16 16"><rect x="1.4" y="2" width="13.2" height="12" fill="#1f1f1f" stroke="#d2d2d2" stroke-width="1"/><path d="M1.8 13.6 V10 L5 7 L8 9.6 L10.4 7.8 L14.2 11 V13.6 Z" fill="#6cb8f0"/><circle cx="11.4" cy="5" r="1.1" fill="#e8a33d"/></svg>
<span class="t" style="left:82.8px;top:286px;font-size:12.4px;line-height:17px;color:#f2f2f2;letter-spacing:-0.338px;">Image</span>
<svg class="r" style="left:51px;top:306.6px;" width="16" height="16" viewBox="0 0 16 16"><text x="8" y="14.6" font-family="Liberation Sans, sans-serif" font-size="16.5" font-weight="700" fill="#d2d2d2" text-anchor="middle">A</text></svg>
<span class="t" style="left:82.8px;top:307px;font-size:12.4px;line-height:17px;color:#f2f2f2;letter-spacing:-0.586px;">Label</span>
<svg class="r" style="left:51px;top:327.6px;" width="16" height="16" viewBox="0 0 16 16"><rect x="1.4" y="1.8" width="13.2" height="12.4" fill="none" stroke="#d2d2d2" stroke-width="1"/><path d="M3.4 4.8 H8.6 M3.4 7.2 H7.6 M3.4 9.6 H8.6 M3.4 12 H7.6" stroke="#d2d2d2" stroke-width="1"/><rect x="10.4" y="2.4" width="3.8" height="5.4" fill="#6cb8f0"/><rect x="10.4" y="8.4" width="3.8" height="5.4" fill="#6cb8f0"/><polygon points="11,6.2 13.6,6.2 12.3,4" fill="#1f1f1f"/><polygon points="11,10 13.6,10 12.3,12.2" fill="#1f1f1f"/></svg>
<span class="t" style="left:82.8px;top:328px;font-size:12.4px;line-height:17px;color:#f2f2f2;letter-spacing:-0.543px;">ListBox</span>
<svg class="r" style="left:51px;top:348.6px;" width="16" height="16" viewBox="0 0 16 16"><circle cx="8" cy="8" r="5.8" fill="none" stroke="#d2d2d2" stroke-width="1.4"/><circle cx="8" cy="8" r="2.2" fill="#d2d2d2"/></svg>
<span class="t" style="left:82.8px;top:349px;font-size:12.4px;line-height:17px;color:#f2f2f2;letter-spacing:-0.422px;">RadioBut...</span>
<svg class="r" style="left:51px;top:369.6px;" width="16" height="16" viewBox="0 0 16 16"><rect x="1.4" y="3" width="13.2" height="10.4" fill="none" stroke="#d2d2d2" stroke-width="1.1"/></svg>
<span class="t" style="left:82.8px;top:370px;font-size:12.4px;line-height:17px;color:#f2f2f2;letter-spacing:-0.428px;">Rectangle</span>
<svg class="r" style="left:51px;top:390.6px;" width="16" height="16" viewBox="0 0 16 16"><rect x="1.4" y="1.6" width="13.2" height="12.8" fill="none" stroke="#d2d2d2" stroke-width="1"/><rect x="3.6" y="4" width="8.8" height="3.2" fill="none" stroke="#d2d2d2" stroke-width="1"/><rect x="3.6" y="9" width="8.8" height="3.2" fill="none" stroke="#d2d2d2" stroke-width="1"/></svg>
<span class="t" style="left:82.8px;top:391px;font-size:12.4px;line-height:17px;color:#f2f2f2;letter-spacing:-0.539px;">StackPanel</span>
<svg class="r" style="left:51px;top:411.6px;" width="16" height="16" viewBox="0 0 16 16"><rect x="1.4" y="6" width="7" height="3.4" fill="#6cb8f0"/><path d="M8.4 9 H14.8 M9.6 7.6 H12.4" stroke="#d2d2d2" stroke-width="1"/></svg>
<span class="t" style="left:82.8px;top:412px;font-size:12.4px;line-height:17px;color:#f2f2f2;letter-spacing:-0.262px;">TabControl</span>
<svg class="r" style="left:51px;top:432.6px;" width="16" height="16" viewBox="0 0 16 16"><rect x="1.6" y="1.6" width="12.8" height="12.8" fill="none" stroke="#d2d2d2" stroke-width="1.1"/><path d="M4.4 4.6 H11.6 M8 4.6 V12" stroke="#d2d2d2" stroke-width="1.8"/></svg>
<span class="t" style="left:82.8px;top:433px;font-size:12.4px;line-height:17px;color:#f2f2f2;letter-spacing:-0.365px;">TextBlock</span>
<svg class="r" style="left:51px;top:453.6px;" width="16" height="16" viewBox="0 0 16 16"><rect x="1.4" y="3" width="13.2" height="10" fill="none" stroke="#d2d2d2" stroke-width="1"/><text x="7.4" y="10.8" font-family="Liberation Sans, sans-serif" font-size="7" font-weight="700" fill="#d2d2d2" text-anchor="middle">abl</text></svg>
<span class="t" style="left:82.8px;top:454px;font-size:12.4px;line-height:17px;color:#f2f2f2;letter-spacing:-0.629px;">TextBox</span>
<svg class="r" style="left:40px;top:478.2px;" width="6.4" height="6.4" viewBox="0 0 6.4 6.4"><polygon points="6.2,0 6.2,6.2 0,6.2" fill="#f2f2f2"/></svg>
<span class="t" style="left:51.3px;top:473.8px;font-size:12.4px;line-height:17px;color:#f2f2f2;letter-spacing:-0.352px;">All WPF Controls</span>
<svg class="r" style="left:51px;top:493.6px;" width="16" height="16" viewBox="0 0 16 16"><polygon points="5,2 5,12.4 7.4,10.2 9.2,14 10.8,13.2 9,9.6 12.2,9.4" fill="#d2d2d2"/></svg>
<span class="t" style="left:82.8px;top:494px;font-size:12.4px;line-height:17px;color:#f2f2f2;letter-spacing:-0.212px;">Pointer</span>
<svg class="r" style="left:51px;top:514.6px;" width="16" height="16" viewBox="0 0 16 16"><rect x="3" y="3" width="10" height="10" fill="none" stroke="#d2d2d2" stroke-width="1.2"/><path d="M1 1 H4 V4 H1 Z M12 1 H15 V4 H12 Z M1 12 H4 V15 H1 Z M12 12 H15 V15 H12 Z" fill="#d2d2d2"/></svg>
<span class="t" style="left:82.8px;top:515px;font-size:12.4px;line-height:17px;color:#f2f2f2;letter-spacing:-0.428px;">Border</span>
<svg class="r" style="left:51px;top:535.6px;" width="16" height="16" viewBox="0 0 16 16"><path d="M7 11.5 H3.5 C2 11.5 1.2 10.6 1.2 9.2 V5 C1.2 3.6 2 2.7 3.5 2.7 H12.5 C14 2.7 14.8 3.6 14.8 5 V8" fill="none" stroke="#d2d2d2" stroke-width="1.1"/><polygon points="8.6,6.4 8.6,14.6 10.4,13 11.6,15.6 12.9,15 11.7,12.5 14,12.3" fill="#d2d2d2"/></svg>
<span class="t" style="left:82.8px;top:536px;font-size:12.4px;line-height:17px;color:#f2f2f2;letter-spacing:-0.094px;">Button</span>
<svg class="r" style="left:51px;top:556.6px;" width="16" height="16" viewBox="0 0 16 16"><rect x="1.6" y="3" width="12.8" height="11.4" fill="none" stroke="#d2d2d2" stroke-width="1"/><path d="M1.6 6.2 H14.4 M4.6 1.2 V4 M8 1.2 V4 M11.4 1.2 V4" stroke="#d2d2d2" stroke-width="1"/><text x="8" y="12.8" font-family="Liberation Sans, sans-serif" font-size="6" font-weight="700" fill="#d2d2d2" text-anchor="middle">12</text></svg>
<span class="t" style="left:82.8px;top:557px;font-size:12.4px;line-height:17px;color:#f2f2f2;letter-spacing:-0.463px;">Calendar</span>
<svg class="r" style="left:51px;top:577.6px;" width="16" height="16" viewBox="0 0 16 16"><rect x="1.6" y="1.6" width="12.8" height="12.8" fill="none" stroke="#d2d2d2" stroke-width="1"/><rect x="3.4" y="3.6" width="3.8" height="3" fill="none" stroke="#d2d2d2" stroke-width="1"/><rect x="7.4" y="8.6" width="5" height="3.4" fill="none" stroke="#d2d2d2" stroke-width="1"/></svg>
<span class="t" style="left:82.8px;top:578px;font-size:12.4px;line-height:17px;color:#f2f2f2;letter-spacing:-0.758px;">Canvas</span>
<svg class="r" style="left:51px;top:598.6px;" width="16" height="16" viewBox="0 0 16 16"><rect x="1.6" y="1.6" width="12.8" height="12.8" fill="none" stroke="#d2d2d2" stroke-width="1.1"/><path d="M4.4 8.4 L6.8 11 L11.4 4.6" fill="none" stroke="#d2d2d2" stroke-width="1.3"/></svg>
<span class="t" style="left:82.8px;top:599px;font-size:12.4px;line-height:17px;color:#f2f2f2;letter-spacing:-0.567px;">CheckBox</span>
<svg class="r" style="left:51px;top:619.6px;" width="16" height="16" viewBox="0 0 16 16"><rect x="1.6" y="1.4" width="12.8" height="4.4" fill="#6cb8f0"/><polygon points="10.4,2.6 13.4,2.6 11.9,4.6" fill="#1f1f1f"/><rect x="3.6" y="6.4" width="10.6" height="8" fill="none" stroke="#d2d2d2" stroke-width="1.1"/><path d="M5.6 9 H12 M5.6 11.6 H10.4" stroke="#d2d2d2" stroke-width="1"/></svg>
<span class="t" style="left:82.8px;top:620px;font-size:12.4px;line-height:17px;color:#f2f2f2;letter-spacing:-0.314px;">ComboB...</span>
<svg class="r" style="left:51px;top:640.6px;" width="16" height="16" viewBox="0 0 16 16"><path d="M4.4 4.6 V1.6 H14.4 V14.4 H9.6" fill="none" stroke="#d2d2d2" stroke-width="1"/><circle cx="5.2" cy="10.4" r="3.9" fill="none" stroke="#d2d2d2" stroke-width="1.2"/><circle cx="5.2" cy="10.4" r="1.3" fill="#d2d2d2"/><path d="M5.2 10.4 L8 7.4" stroke="#d2d2d2" stroke-width="1"/></svg>
<span class="t" style="left:82.8px;top:641px;font-size:12.4px;line-height:17px;color:#f2f2f2;letter-spacing:-0.242px;">Content...</span>
<svg class="r" style="left:51px;top:661.6px;" width="16" height="16" viewBox="0 0 16 16"><path d="M7.4 1.6 h2.2 v2.2 h-2.2z M10.6 1.6 h2.2 v2.2 h-2.2z M13.6 1.6 h1.8 v2.2 h-1.8z M10.6 4.8 h2.2 v2.2 h-2.2z M13.6 4.8 h1.8 v2.2 h-1.8z M10.6 8 h2.2 v2.2 h-2.2z M13.6 8 h1.8 v2.2 h-1.8z" fill="#d2d2d2"/><path d="M1.4 5.4 C1.4 3.6 8.6 3.6 8.6 5.4 V13 C8.6 14.8 1.4 14.8 1.4 13 Z" fill="#6cb8f0"/><ellipse cx="5" cy="5.4" rx="3.6" ry="1.3" fill="#a9d8ff"/></svg>
<span class="t" style="left:82.8px;top:662px;font-size:12.4px;line-height:17px;color:#f2f2f2;letter-spacing:-0.532px;">DataGrid</span>
<svg class="r" style="left:51px;top:682.6px;" width="16" height="16" viewBox="0 0 16 16"><rect x="1.6" y="2" width="12.8" height="12.4" fill="none" stroke="#d2d2d2" stroke-width="1"/><rect x="1.6" y="2" width="12.8" height="3.6" fill="#d2d2d2"/><polygon points="10.6,3 13.4,3 12,4.8" fill="#1f1f1f"/><path d="M4 8 h2 v1.8 h-2z M4 11 h2 v1.8 h-2z M7 8 h2 v1.8 h-2z M7 11 h2 v1.8 h-2z M10 8 h2 v1.8 h-2z M10 11 h2 v1.8 h-2z " fill="#d2d2d2"/></svg>
<span class="t" style="left:82.8px;top:683px;font-size:12.4px;line-height:17px;color:#f2f2f2;letter-spacing:-0.520px;">DatePicker</span>
<svg class="r" style="left:51px;top:703.6px;" width="16" height="16" viewBox="0 0 16 16"><rect x="1.6" y="1.6" width="12.8" height="12.8" fill="none" stroke="#d2d2d2" stroke-width="1"/><path d="M1.6 5.2 H14.4 M5.6 5.2 V14.4" stroke="#d2d2d2" stroke-width="1"/></svg>
<span class="t" style="left:82.8px;top:704px;font-size:12.4px;line-height:17px;color:#f2f2f2;letter-spacing:-0.501px;">DockPanel</span>
<svg class="r" style="left:51px;top:724.6px;" width="16" height="16" viewBox="0 0 16 16"><path d="M5 6 V1.6 H14.4 V14.4 H10.6" fill="none" stroke="#d2d2d2" stroke-width="1"/><circle cx="5.6" cy="10.6" r="3.9" fill="none" stroke="#d2d2d2" stroke-width="1.2"/><path d="M5.6 8.4 V10.8 H7.8" fill="none" stroke="#d2d2d2" stroke-width="1"/></svg>
<span class="t" style="left:82.8px;top:725px;font-size:12.4px;line-height:17px;color:#f2f2f2;letter-spacing:-0.327px;">Docume...</span>
<svg class="r" style="left:51px;top:745.6px;" width="16" height="16" viewBox="0 0 16 16"><ellipse cx="8" cy="8" rx="6.6" ry="4.2" fill="none" stroke="#d2d2d2" stroke-width="1.1"/></svg>
<span class="t" style="left:82.8px;top:746px;font-size:12.4px;line-height:17px;color:#f2f2f2;letter-spacing:-0.538px;">Ellipse</span>
<svg class="r" style="left:51px;top:766.6px;" width="16" height="16" viewBox="0 0 16 16"><circle cx="8" cy="8" r="6.2" fill="none" stroke="#d2d2d2" stroke-width="1.3"/><path d="M5.6 5.6 L8 7.6 L10.4 5.6 M5.6 8.6 L8 10.6 L10.4 8.6" fill="none" stroke="#d2d2d2" stroke-width="1.1"/></svg>
<span class="t" style="left:82.8px;top:767px;font-size:12.4px;line-height:17px;color:#f2f2f2;letter-spacing:-0.531px;">Expander</span>
<svg class="r" style="left:51px;top:787.6px;" width="16" height="16" viewBox="0 0 16 16"><path d="M1.6 14.2 V6.6 H14.4 V14.2 Z" fill="none" stroke="#d2d2d2" stroke-width="1"/><path d="M4.4 6.4 L8 2 L11.6 6.4" fill="none" stroke="#d2d2d2" stroke-width="1"/></svg>
<span class="t" style="left:82.8px;top:788px;font-size:12.4px;line-height:17px;color:#f2f2f2;letter-spacing:-0.613px;">Frame</span>
<svg class="r" style="left:51px;top:808.6px;" width="16" height="16" viewBox="0 0 16 16"><path d="M2.4 2.4 h3.2 v3.2 h-3.2z M2.4 6.6 h3.2 v3.2 h-3.2z M2.4 10.8 h3.2 v3.2 h-3.2z M6.6 2.4 h3.2 v3.2 h-3.2z M6.6 6.6 h3.2 v3.2 h-3.2z M6.6 10.8 h3.2 v3.2 h-3.2z M10.8 2.4 h3.2 v3.2 h-3.2z M10.8 6.6 h3.2 v3.2 h-3.2z M10.8 10.8 h3.2 v3.2 h-3.2z " fill="#d2d2d2"/></svg>
<span class="t" style="left:82.8px;top:809px;font-size:12.4px;line-height:17px;color:#f2f2f2;letter-spacing:-0.580px;">Grid</span>
<svg class="r" style="left:51px;top:829.6px;" width="16" height="16" viewBox="0 0 16 16"><path d="M8 1.4 V14.6" stroke="#d2d2d2" stroke-width="1.6"/><path d="M6 8 H0.8 M3.4 5.4 L0.8 8 L3.4 10.6 M10 8 H15.2 M12.6 5.4 L15.2 8 L12.6 10.6" fill="none" stroke="#d2d2d2" stroke-width="1.4"/></svg>
<span class="t" style="left:82.8px;top:830px;font-size:12.4px;line-height:17px;color:#f2f2f2;letter-spacing:-0.283px;">GridSplitt...</span>
<svg class="r" style="left:51px;top:850.6px;" width="16" height="16" viewBox="0 0 16 16"><path d="M3.6 4 H1.6 V14.4 H14.4 V4 H12.4" fill="none" stroke="#d2d2d2" stroke-width="1"/><text x="8" y="6.4" font-family="Liberation Sans, sans-serif" font-size="6.4" font-weight="700" fill="#d2d2d2" text-anchor="middle">XY</text></svg>
<span class="t" style="left:82.8px;top:851px;font-size:12.4px;line-height:17px;color:#f2f2f2;letter-spacing:-0.481px;">GroupBox</span>
<svg class="r" style="left:51px;top:871.6px;" width="16" height="16" viewBox="0 0 16 16"><rect x="1.4" y="2" width="13.2" height="12" fill="#1f1f1f" stroke="#d2d2d2" stroke-width="1"/><path d="M1.8 13.6 V10 L5 7 L8 9.6 L10.4 7.8 L14.2 11 V13.6 Z" fill="#6cb8f0"/><circle cx="11.4" cy="5" r="1.1" fill="#e8a33d"/></svg>
<span class="t" style="left:82.8px;top:872px;font-size:12.4px;line-height:17px;color:#f2f2f2;letter-spacing:-0.338px;">Image</span>
<svg class="r" style="left:51px;top:892.6px;" width="16" height="16" viewBox="0 0 16 16"><text x="8" y="14.6" font-family="Liberation Sans, sans-serif" font-size="16.5" font-weight="700" fill="#d2d2d2" text-anchor="middle">A</text></svg>
<span class="t" style="left:82.8px;top:893px;font-size:12.4px;line-height:17px;color:#f2f2f2;letter-spacing:-0.586px;">Label</span>
<svg class="r" style="left:51px;top:913.6px;" width="16" height="16" viewBox="0 0 16 16"><rect x="1.4" y="1.8" width="13.2" height="12.4" fill="none" stroke="#d2d2d2" stroke-width="1"/><path d="M3.4 4.8 H8.6 M3.4 7.2 H7.6 M3.4 9.6 H8.6 M3.4 12 H7.6" stroke="#d2d2d2" stroke-width="1"/><rect x="10.4" y="2.4" width="3.8" height="5.4" fill="#6cb8f0"/><rect x="10.4" y="8.4" width="3.8" height="5.4" fill="#6cb8f0"/><polygon points="11,6.2 13.6,6.2 12.3,4" fill="#1f1f1f"/><polygon points="11,10 13.6,10 12.3,12.2" fill="#1f1f1f"/></svg>
<span class="t" style="left:82.8px;top:914px;font-size:12.4px;line-height:17px;color:#f2f2f2;letter-spacing:-0.543px;">ListBox</span>
<svg class="r" style="left:51px;top:934.6px;" width="16" height="16" viewBox="0 0 16 16"><rect x="1.6" y="1.6" width="12.8" height="12.8" fill="none" stroke="#d2d2d2" stroke-width="1"/><path d="M4 5 H12 M4 7.4 H10.4 M4 9.8 H12 M4 12.2 H10.4" stroke="#d2d2d2" stroke-width="1"/></svg>
<span class="t" style="left:82.8px;top:935px;font-size:12.4px;line-height:17px;color:#f2f2f2;letter-spacing:-0.427px;">ListView</span>
<svg class="r" style="left:51px;top:955.6px;" width="16" height="16" viewBox="0 0 16 16"><rect x="1.4" y="3" width="13.2" height="10" fill="none" stroke="#d2d2d2" stroke-width="1"/><polygon points="6.4,5.6 10.4,8 6.4,10.4" fill="none" stroke="#d2d2d2" stroke-width="1"/><path d="M3.4 4.6 V5.8 M3.4 7.4 V8.6 M3.4 10.2 V11.4 M12.6 4.6 V5.8 M12.6 7.4 V8.6 M12.6 10.2 V11.4" stroke="#d2d2d2" stroke-width="1"/></svg>
<span class="t" style="left:82.8px;top:956px;font-size:12.4px;line-height:17px;color:#f2f2f2;letter-spacing:-0.483px;">MediaEle...</span>
<svg class="r" style="left:51px;top:976.6px;" width="16" height="16" viewBox="0 0 16 16"><rect x="1.6" y="1.6" width="8" height="3.4" fill="none" stroke="#d2d2d2" stroke-width="1"/><rect x="1.6" y="5" width="12.8" height="9.4" fill="none" stroke="#d2d2d2" stroke-width="1"/><path d="M3.8 8 H9.6 M3.8 10.8 H8" stroke="#d2d2d2" stroke-width="1"/></svg>
<span class="t" style="left:82.8px;top:977px;font-size:12.4px;line-height:17px;color:#f2f2f2;letter-spacing:-0.193px;">Menu</span>
<svg class="r" style="left:51px;top:997.6px;" width="16" height="16" viewBox="0 0 16 16"><rect x="1.4" y="3" width="13.2" height="10.4" fill="none" stroke="#d2d2d2" stroke-width="1"/><text x="8" y="12.6" font-family="Liberation Sans, sans-serif" font-size="9" font-weight="700" fill="#d2d2d2" text-anchor="middle">**</text></svg>
<span class="t" style="left:82.8px;top:998px;font-size:12.4px;line-height:17px;color:#f2f2f2;letter-spacing:-0.584px;">Passwor...</span>
<div class="r" style="left:31px;top:1010.6px;width:131px;height:6.4px;background:#1f1f1f;"></div>
<div class="r" style="left:31px;top:1009.6px;width:131px;height:1px;background:#3d3d3d;"></div>
<!-- part_editor -->
<div class="r" style="left:170px;top:73px;width:85.5px;height:19px;background:#2b2b2b;"></div>
<span class="t" style="left:174.2px;top:74.8px;font-size:12.4px;line-height:17px;color:#b4b4b4;letter-spacing:0.099px;">Output</span>
<div class="r" style="left:256px;top:72px;width:155px;height:20px;background:#3a3a3a;"></div>
<div class="r" style="left:256px;top:72px;width:155px;height:2px;background:#7160e8;"></div>
<span class="t" style="left:260.3px;top:75.4px;font-size:12.4px;line-height:17px;color:#ffffff;font-weight:700;letter-spacing:-0.247px;">MainWindow.xaml*</span>
<svg class="r" style="left:378px;top:79px;" width="9" height="8" viewBox="0 0 9 8"><path d="M0.4 4 H3.4 M3.4 1 V7 M3.4 1.6 H7.6 V5.4 H3.4 M3.4 6 H7.6" fill="none" stroke="#d2d2d2" stroke-width="1"/></svg>
<svg class="r" style="left:396.5px;top:78.5px;" width="9.2" height="9.2" viewBox="0 0 9.2 9.2"><path d="M0.5 0.5 L8.7 8.7 M8.7 0.5 L0.5 8.7" stroke="#d2d2d2" stroke-width="1.3"/></svg>
<div class="r" style="left:411.5px;top:73px;width:166.5px;height:19px;background:#2b2b2b;"></div>
<span class="t" style="left:416.3px;top:74.8px;font-size:12.4px;line-height:17px;color:#b4b4b4;letter-spacing:-0.095px;">MainWindow.xaml.cs*</span>
<svg class="r" style="left:1657.3px;top:81.4px;" width="7.6" height="4.2" viewBox="0 0 7.6 4.2"><polygon points="0,0 7.6,0 3.8,4.2" fill="#d2d2d2"/></svg>
<svg class="r" style="left:1673.5px;top:77px;" width="11" height="11" viewBox="0 0 11 11"><circle cx="5.5" cy="5.5" r="2.6" fill="none" stroke="#d2d2d2" stroke-width="1.9"/><path d="M8.70 5.50 L10.80 5.50" stroke="#d2d2d2" stroke-width="1.7"/><path d="M7.76 7.76 L9.25 9.25" stroke="#d2d2d2" stroke-width="1.7"/><path d="M5.50 8.70 L5.50 10.80" stroke="#d2d2d2" stroke-width="1.7"/><path d="M3.24 7.76 L1.75 9.25" stroke="#d2d2d2" stroke-width="1.7"/><path d="M2.30 5.50 L0.20 5.50" stroke="#d2d2d2" stroke-width="1.7"/><path d="M3.24 3.24 L1.75 1.75" stroke="#d2d2d2" stroke-width="1.7"/><path d="M5.50 2.30 L5.50 0.20" stroke="#d2d2d2" stroke-width="1.7"/><path d="M7.76 3.24 L9.25 1.75" stroke="#d2d2d2" stroke-width="1.7"/></svg>
<div class="r" style="left:168px;top:91.6px;width:1517.5px;height:2.4px;background:#7160e8;"></div>
<div class="r" style="left:168px;top:94px;width:1517.5px;height:22px;background:#2b2b2b;"></div>
<div class="r" style="left:169px;top:94px;width:716px;height:21.8px;background:#383838;"></div>
<div class="r" style="left:889.5px;top:94px;width:716px;height:21.8px;background:#383838;"></div>
<div class="r" style="left:1606.5px;top:94px;width:79px;height:21.8px;background:#2d2d2d;"></div>
<svg class="r" style="left:173px;top:99px;" width="14" height="9.4" viewBox="0 0 14 9.4"><rect x="0.5" y="0.5" width="13" height="8.4" fill="none" stroke="#d2d2d2" stroke-width="1"/><path d="M5 2.6 L2.8 4.7 L5 6.8 M9 2.6 L11.2 4.7 L9 6.8" fill="none" stroke="#d2d2d2" stroke-width="1"/></svg>
<span class="t" style="left:190px;top:97.6px;font-size:12.4px;line-height:17px;color:#f2f2f2;letter-spacing:-0.246px;">RadioButton</span>
<svg class="r" style="left:893px;top:99px;" width="14" height="9.4" viewBox="0 0 14 9.4"><rect x="0.5" y="0.5" width="13" height="8.4" fill="none" stroke="#d2d2d2" stroke-width="1"/><path d="M5 2.6 L2.8 4.7 L5 6.8 M9 2.6 L11.2 4.7 L9 6.8" fill="none" stroke="#d2d2d2" stroke-width="1"/></svg>
<span class="t" style="left:910.3px;top:97.6px;font-size:12.4px;line-height:17px;color:#f2f2f2;letter-spacing:-0.246px;">RadioButton</span>
<svg class="r" style="left:877px;top:103.6px;" width="6" height="3.4" viewBox="0 0 6 3.4"><polygon points="0,0 6,0 3,3.4" fill="#d2d2d2"/></svg>
<svg class="r" style="left:1596.4px;top:103.6px;" width="6" height="3.4" viewBox="0 0 6 3.4"><polygon points="0,0 6,0 3,3.4" fill="#d2d2d2"/></svg>
<svg class="r" style="left:1640px;top:97.5px;" width="11.4" height="14" viewBox="0 0 11.4 14"><path d="M0 6 H11.4 M0 8.2 H11.4 M5.7 0.6 V4.8 M5.7 9.4 V13.4 M3.6 2.6 L5.7 0.5 L7.8 2.6 M3.6 11.4 L5.7 13.5 L7.8 11.4" fill="none" stroke="#d2d2d2" stroke-width="1.1"/></svg>
<div class="r" style="left:168px;top:115.8px;width:1438.5px;height:567px;background:#1e1e1e;overflow:hidden;"></div>
<div class="r" style="left:169px;top:115.8px;width:24.3px;height:567px;background:#333333;"></div>
<div class="r" style="left:269px;top:115.8px;width:7.7px;height:567px;background:#55b155;"></div>
<div class="r" style="left:269.1px;top:412.15px;width:7.4px;height:24.05px;background:#1e1e1e;border:1.3px solid #d7a820;"></div>
<div class="r" style="left:269.1px;top:583.3px;width:7.4px;height:24.05px;background:#1e1e1e;border:1.3px solid #d7a820;"></div>
<div class="r" style="left:269.1px;top:656.65px;width:7.4px;height:24.05px;background:#1e1e1e;border:1.3px solid #d7a820;"></div>
<div class="r" style="left:286px;top:115.8px;width:2px;height:567px;background:#b2b2b2;"></div>
<div class="r" style="left:287px;top:141.2px;width:6px;height:1.8px;background:#b2b2b2;"></div>
<div class="r" style="left:287px;top:361.25px;width:6px;height:1.8px;background:#b2b2b2;"></div>
<div class="r" style="left:287px;top:532.4px;width:6px;height:1.8px;background:#b2b2b2;"></div>
<div class="r" style="left:279.8px;top:173.45px;width:13.3px;height:13.3px;background:#1e1e1e;border:1.3px solid #b2b2b2;"></div>
<div class="r" style="left:282.6px;top:179.25px;width:7.8px;height:1.7px;background:#ffffff;"></div>
<div class="r" style="left:279.8px;top:246.8px;width:13.3px;height:13.3px;background:#1e1e1e;border:1.3px solid #b2b2b2;"></div>
<div class="r" style="left:282.6px;top:252.6px;width:7.8px;height:1.7px;background:#ffffff;"></div>
<div class="r" style="left:279.8px;top:417.95px;width:13.3px;height:13.3px;background:#1e1e1e;border:1.3px solid #b2b2b2;"></div>
<div class="r" style="left:282.6px;top:423.75px;width:7.8px;height:1.7px;background:#ffffff;"></div>
<div class="r" style="left:279.8px;top:589.1px;width:13.3px;height:13.3px;background:#1e1e1e;border:1.3px solid #b2b2b2;"></div>
<div class="r" style="left:282.6px;top:594.9px;width:7.8px;height:1.7px;background:#ffffff;"></div>
<svg class="r" style="left:335px;top:119px;" width="2" height="563.8" viewBox="0 0 2 563.8"><path d="M1 0 V563.8" stroke="#787878" stroke-width="1.6" stroke-dasharray="4.3 4.42" stroke-dashoffset="0"/></svg>
<svg class="r" style="left:378.9px;top:119px;" width="2" height="563.8" viewBox="0 0 2 563.8"><path d="M1 0 V563.8" stroke="#787878" stroke-width="1.6" stroke-dasharray="4.3 4.42" stroke-dashoffset="0"/></svg>
<svg class="r" style="left:422.8px;top:119px;" width="2" height="563.8" viewBox="0 0 2 563.8"><path d="M1 0 V563.8" stroke="#787878" stroke-width="1.6" stroke-dasharray="4.3 4.42" stroke-dashoffset="0"/></svg>
<svg class="r" style="left:466.7px;top:192.6px;" width="2" height="490.2" viewBox="0 0 2 490.2"><path d="M1 0 V490.2" stroke="#787878" stroke-width="1.6" stroke-dasharray="4.3 4.42" stroke-dashoffset="0"/></svg>
<svg class="r" style="left:510.6px;top:264.95px;" width="2" height="72.35" viewBox="0 0 2 72.35"><path d="M1 0 V72.35" stroke="#787878" stroke-width="1.6" stroke-dasharray="4.3 4.42" stroke-dashoffset="0"/></svg>
<svg class="r" style="left:510.6px;top:436.1px;" width="2" height="72.35" viewBox="0 0 2 72.35"><path d="M1 0 V72.35" stroke="#787878" stroke-width="1.6" stroke-dasharray="4.3 4.42" stroke-dashoffset="0"/></svg>
<svg class="r" style="left:510.6px;top:607.25px;" width="2" height="75.55" viewBox="0 0 2 75.55"><path d="M1 0 V75.55" stroke="#787878" stroke-width="1.6" stroke-dasharray="4.3 4.42" stroke-dashoffset="0"/></svg>
<div class="r" style="left:293px;top:607.2px;width:1310.5px;height:24.2px;border:2px solid #474747;"></div>
<span class="t c" style="left:243.70px;top:118.75px;color:#8c8c8c;">33</span>
<span class="t c" style="left:243.70px;top:143.20px;color:#8c8c8c;">34</span>
<span class="t c" style="left:243.70px;top:167.65px;color:#8c8c8c;">35</span>
<span class="t c" style="left:243.70px;top:192.10px;color:#8c8c8c;">36</span>
<span class="t c" style="left:243.70px;top:216.55px;color:#8c8c8c;">37</span>
<span class="t c" style="left:243.70px;top:241.00px;color:#8c8c8c;">38</span>
<span class="t c" style="left:243.70px;top:265.45px;color:#8c8c8c;">39</span>
<span class="t c" style="left:243.70px;top:289.90px;color:#8c8c8c;">40</span>
<span class="t c" style="left:243.70px;top:314.35px;color:#8c8c8c;">41</span>
<span class="t c" style="left:243.70px;top:338.80px;color:#8c8c8c;">42</span>
<span class="t c" style="left:243.70px;top:363.25px;color:#8c8c8c;">43</span>
<span class="t c" style="left:243.70px;top:387.70px;color:#8c8c8c;">44</span>
<span class="t c" style="left:243.70px;top:412.15px;color:#8c8c8c;">45</span>
<span class="t c" style="left:243.70px;top:436.60px;color:#8c8c8c;">46</span>
<span class="t c" style="left:243.70px;top:461.05px;color:#8c8c8c;">47</span>
<span class="t c" style="left:243.70px;top:485.50px;color:#8c8c8c;">48</span>
<span class="t c" style="left:243.70px;top:509.95px;color:#8c8c8c;">49</span>
<span class="t c" style="left:243.70px;top:534.40px;color:#8c8c8c;">50</span>
<span class="t c" style="left:243.70px;top:558.85px;color:#8c8c8c;">51</span>
<span class="t c" style="left:243.70px;top:583.30px;color:#8c8c8c;">52</span>
<span class="t c" style="left:243.70px;top:607.75px;color:#ffffff;font-weight:700;">53</span>
<span class="t c" style="left:243.70px;top:632.20px;color:#8c8c8c;">54</span>
<span class="t c" style="left:243.70px;top:656.65px;color:#8c8c8c;">55</span>
<span class="t c" style="left:463.00px;top:117.25px;color:#808080;">&lt;/</span><span class="t c" style="left:484.94px;top:117.25px;color:#f4f4f4;">Grid.ColumnDefinitions</span><span class="t c" style="left:726.28px;top:117.25px;color:#808080;">&gt;</span>
<span class="t c" style="left:463.00px;top:166.15px;color:#808080;">&lt;</span><span class="t c" style="left:473.97px;top:166.15px;color:#f4f4f4;">StackPanel</span>
<span class="r" style="left:584.50px;top:167.85px;width:143.50px;height:19.9px;background:#2a2c34;border-radius:2.5px"></span><span class="t" style="left:594.90px;top:166.95px;font-family:'DejaVu Sans Mono',monospace;font-size:14.45px;line-height:24.45px;color:#9d9d8c">Grid.Column="0"</span>
<span class="t c" style="left:730.60px;top:166.15px;color:#808080;">&gt;</span>
<span class="t c" style="left:507.00px;top:239.50px;color:#808080;">&lt;</span><span class="t c" style="left:517.97px;top:239.50px;color:#f4f4f4;">RadioButton</span><span class="t c" style="left:649.61px;top:239.50px;color:#9cdcfe;">Margin</span><span class="t c" style="left:715.43px;top:239.50px;color:#969696;">=</span><span class="t c" style="left:726.40px;top:239.50px;color:#569cd6;">"</span><span class="r" style="left:738.27px;top:241.20px;width:38.60px;height:19.9px;background:#2a2c34;border-radius:2.5px"></span><span class="t" style="left:740.67px;top:240.30px;font-family:'DejaVu Sans Mono',monospace;font-size:14px;line-height:24.45px;color:#9d9d8c">[l:]</span><span class="t c" style="left:779.37px;top:239.50px;color:#569cd6;">50,</span><span class="r" style="left:813.18px;top:241.20px;width:38.60px;height:19.9px;background:#2a2c34;border-radius:2.5px"></span><span class="t" style="left:815.58px;top:240.30px;font-family:'DejaVu Sans Mono',monospace;font-size:14px;line-height:24.45px;color:#9d9d8c">[t:]</span><span class="t c" style="left:854.28px;top:239.50px;color:#569cd6;">20,</span><span class="r" style="left:888.09px;top:241.20px;width:38.60px;height:19.9px;background:#2a2c34;border-radius:2.5px"></span><span class="t" style="left:890.49px;top:240.30px;font-family:'DejaVu Sans Mono',monospace;font-size:14px;line-height:24.45px;color:#9d9d8c">[r:]</span><span class="t c" style="left:929.19px;top:239.50px;color:#569cd6;">100,</span><span class="r" style="left:973.97px;top:241.20px;width:38.60px;height:19.9px;background:#2a2c34;border-radius:2.5px"></span><span class="t" style="left:976.37px;top:240.30px;font-family:'DejaVu Sans Mono',monospace;font-size:14px;line-height:24.45px;color:#9d9d8c">[b:]</span><span class="t c" style="left:1015.07px;top:239.50px;color:#569cd6;">80"</span><span class="t c" style="left:1058.95px;top:239.50px;color:#9cdcfe;">Click</span><span class="t c" style="left:1113.80px;top:239.50px;color:#969696;">=</span><span class="t c" style="left:1124.77px;top:239.50px;color:#569cd6;">"RadioButton_Click"</span><span class="t c" style="left:1333.20px;top:239.50px;color:#808080;">&gt;</span>
<span class="t c" style="left:551.00px;top:288.40px;color:#808080;">&lt;</span><span class="t c" style="left:561.97px;top:288.40px;color:#f4f4f4;">TextBlock</span><span class="t c" style="left:660.70px;top:288.40px;color:#808080;">&gt;</span><span class="t c" style="left:671.67px;top:288.40px;color:#c8c8c8;">Vermell</span><svg class="r" style="left:671.67px;top:307.5px;" width="77.79" height="6" viewBox="0 0 77.79 6"><path d="M0 3 Q1.48 6.20 2.95 3 Q4.43 -0.20 5.90 3 Q7.38 6.20 8.85 3 Q10.33 -0.20 11.80 3 Q13.28 6.20 14.75 3 Q16.23 -0.20 17.70 3 Q19.18 6.20 20.65 3 Q22.12 -0.20 23.60 3 Q25.07 6.20 26.55 3 Q28.02 -0.20 29.50 3 Q30.97 6.20 32.45 3 Q33.92 -0.20 35.40 3 Q36.88 6.20 38.35 3 Q39.83 -0.20 41.30 3 Q42.78 6.20 44.25 3 Q45.73 -0.20 47.20 3 Q48.68 6.20 50.15 3 Q51.63 -0.20 53.10 3 Q54.58 6.20 56.05 3 Q57.53 -0.20 59.00 3 Q60.48 6.20 61.95 3 Q63.43 -0.20 64.90 3 Q66.38 6.20 67.85 3 Q69.33 -0.20 70.80 3 Q72.28 6.20 73.75 3 Q75.23 -0.20 76.70 3" fill="none" stroke="#1fd01f" stroke-width="1.25"/></svg><span class="t c" style="left:748.46px;top:288.40px;color:#808080;">&lt;/</span><span class="t c" style="left:770.40px;top:288.40px;color:#f4f4f4;">TextBlock</span><span class="t c" style="left:869.13px;top:288.40px;color:#808080;">&gt;</span>
<span class="t c" style="left:507.00px;top:337.30px;color:#808080;">&lt;/</span><span class="t c" style="left:528.94px;top:337.30px;color:#f4f4f4;">RadioButton</span><span class="t c" style="left:649.61px;top:337.30px;color:#808080;">&gt;</span>
<span class="t c" style="left:507.00px;top:410.65px;color:#808080;">&lt;</span><span class="t c" style="left:517.97px;top:410.65px;color:#f4f4f4;">RadioButton</span><span class="t c" style="left:649.61px;top:410.65px;color:#9cdcfe;">Margin</span><span class="t c" style="left:715.43px;top:410.65px;color:#969696;">=</span><span class="t c" style="left:726.40px;top:410.65px;color:#569cd6;">"</span><span class="r" style="left:738.27px;top:412.35px;width:38.60px;height:19.9px;background:#2a2c34;border-radius:2.5px"></span><span class="t" style="left:740.67px;top:411.45px;font-family:'DejaVu Sans Mono',monospace;font-size:14px;line-height:24.45px;color:#9d9d8c">[l:]</span><span class="t c" style="left:779.37px;top:410.65px;color:#569cd6;">50,</span><span class="r" style="left:813.18px;top:412.35px;width:38.60px;height:19.9px;background:#2a2c34;border-radius:2.5px"></span><span class="t" style="left:815.58px;top:411.45px;font-family:'DejaVu Sans Mono',monospace;font-size:14px;line-height:24.45px;color:#9d9d8c">[t:]</span><span class="t c" style="left:854.28px;top:410.65px;color:#569cd6;">20,</span><span class="r" style="left:888.09px;top:412.35px;width:38.60px;height:19.9px;background:#2a2c34;border-radius:2.5px"></span><span class="t" style="left:890.49px;top:411.45px;font-family:'DejaVu Sans Mono',monospace;font-size:14px;line-height:24.45px;color:#9d9d8c">[r:]</span><span class="t c" style="left:929.19px;top:410.65px;color:#569cd6;">100,</span><span class="r" style="left:973.97px;top:412.35px;width:38.60px;height:19.9px;background:#2a2c34;border-radius:2.5px"></span><span class="t" style="left:976.37px;top:411.45px;font-family:'DejaVu Sans Mono',monospace;font-size:14px;line-height:24.45px;color:#9d9d8c">[b:]</span><span class="t c" style="left:1015.07px;top:410.65px;color:#569cd6;">80"</span><span class="t c" style="left:1058.95px;top:410.65px;color:#9cdcfe;">Click</span><span class="t c" style="left:1113.80px;top:410.65px;color:#969696;">=</span><span class="t c" style="left:1124.77px;top:410.65px;color:#569cd6;">"RadioButton_Click_1"</span><span class="t c" style="left:1355.14px;top:410.65px;color:#808080;">&gt;</span>
<span class="t c" style="left:551.00px;top:459.55px;color:#808080;">&lt;</span><span class="t c" style="left:561.97px;top:459.55px;color:#f4f4f4;">TextBlock</span><span class="t c" style="left:660.70px;top:459.55px;color:#808080;">&gt;</span><span class="t c" style="left:671.67px;top:459.55px;color:#c8c8c8;">Groc</span><svg class="r" style="left:671.67px;top:478.65px;" width="44.88" height="6" viewBox="0 0 44.88 6"><path d="M0 3 Q1.48 6.20 2.95 3 Q4.43 -0.20 5.90 3 Q7.38 6.20 8.85 3 Q10.33 -0.20 11.80 3 Q13.28 6.20 14.75 3 Q16.23 -0.20 17.70 3 Q19.18 6.20 20.65 3 Q22.12 -0.20 23.60 3 Q25.07 6.20 26.55 3 Q28.02 -0.20 29.50 3 Q30.97 6.20 32.45 3 Q33.92 -0.20 35.40 3 Q36.88 6.20 38.35 3 Q39.83 -0.20 41.30 3 Q42.78 6.20 44.25 3" fill="none" stroke="#1fd01f" stroke-width="1.25"/></svg><span class="t c" style="left:715.55px;top:459.55px;color:#808080;">&lt;/</span><span class="t c" style="left:737.49px;top:459.55px;color:#f4f4f4;">TextBlock</span><span class="t c" style="left:836.22px;top:459.55px;color:#808080;">&gt;</span>
<span class="t c" style="left:507.00px;top:508.45px;color:#808080;">&lt;/</span><span class="t c" style="left:528.94px;top:508.45px;color:#f4f4f4;">RadioButton</span><span class="t c" style="left:649.61px;top:508.45px;color:#808080;">&gt;</span>
<span class="t c" style="left:507.00px;top:581.80px;color:#808080;">&lt;</span><span class="t c" style="left:517.97px;top:581.80px;color:#f4f4f4;">RadioButton</span><span class="t c" style="left:649.61px;top:581.80px;color:#9cdcfe;">Margin</span><span class="t c" style="left:715.43px;top:581.80px;color:#969696;">=</span><span class="t c" style="left:726.40px;top:581.80px;color:#569cd6;">"</span><span class="r" style="left:738.27px;top:583.50px;width:38.60px;height:19.9px;background:#2a2c34;border-radius:2.5px"></span><span class="t" style="left:740.67px;top:582.60px;font-family:'DejaVu Sans Mono',monospace;font-size:14px;line-height:24.45px;color:#9d9d8c">[l:]</span><span class="t c" style="left:779.37px;top:581.80px;color:#569cd6;">50,</span><span class="r" style="left:813.18px;top:583.50px;width:38.60px;height:19.9px;background:#2a2c34;border-radius:2.5px"></span><span class="t" style="left:815.58px;top:582.60px;font-family:'DejaVu Sans Mono',monospace;font-size:14px;line-height:24.45px;color:#9d9d8c">[t:]</span><span class="t c" style="left:854.28px;top:581.80px;color:#569cd6;">20,</span><span class="r" style="left:888.09px;top:583.50px;width:38.60px;height:19.9px;background:#2a2c34;border-radius:2.5px"></span><span class="t" style="left:890.49px;top:582.60px;font-family:'DejaVu Sans Mono',monospace;font-size:14px;line-height:24.45px;color:#9d9d8c">[r:]</span><span class="t c" style="left:929.19px;top:581.80px;color:#569cd6;">100,</span><span class="r" style="left:973.97px;top:583.50px;width:38.60px;height:19.9px;background:#2a2c34;border-radius:2.5px"></span><span class="t" style="left:976.37px;top:582.60px;font-family:'DejaVu Sans Mono',monospace;font-size:14px;line-height:24.45px;color:#9d9d8c">[b:]</span><span class="t c" style="left:1015.07px;top:581.80px;color:#569cd6;">80"</span><span class="t c" style="left:1058.95px;top:581.80px;color:#9cdcfe;">Click</span><span class="t c" style="left:1113.80px;top:581.80px;color:#969696;">=</span><span class="t c" style="left:1124.77px;top:581.80px;color:#569cd6;">"RadioButton_Click_2"</span><span class="t c" style="left:1355.14px;top:581.80px;color:#808080;">&gt;</span>
<span class="t c" style="left:551.00px;top:630.70px;color:#808080;">&lt;</span><span class="t c" style="left:561.97px;top:630.70px;color:#f4f4f4;">TextBlock</span><span class="t c" style="left:660.70px;top:630.70px;color:#808080;">&gt;</span><span class="t c" style="left:671.67px;top:630.70px;color:#c8c8c8;">Verd</span><svg class="r" style="left:671.67px;top:649.8px;" width="44.88" height="6" viewBox="0 0 44.88 6"><path d="M0 3 Q1.48 6.20 2.95 3 Q4.43 -0.20 5.90 3 Q7.38 6.20 8.85 3 Q10.33 -0.20 11.80 3 Q13.28 6.20 14.75 3 Q16.23 -0.20 17.70 3 Q19.18 6.20 20.65 3 Q22.12 -0.20 23.60 3 Q25.07 6.20 26.55 3 Q28.02 -0.20 29.50 3 Q30.97 6.20 32.45 3 Q33.92 -0.20 35.40 3 Q36.88 6.20 38.35 3 Q39.83 -0.20 41.30 3 Q42.78 6.20 44.25 3" fill="none" stroke="#1fd01f" stroke-width="1.25"/></svg><span class="t c" style="left:715.55px;top:630.70px;color:#808080;">&lt;/</span><span class="t c" style="left:737.49px;top:630.70px;color:#f4f4f4;">TextBlock</span><span class="t c" style="left:836.22px;top:630.70px;color:#808080;">&gt;</span>
<div class="r" style="left:1606px;top:115.8px;width:79.5px;height:567px;background:#3e3e42;"></div>
<div class="r" style="left:1606px;top:115.8px;width:79.5px;height:17.2px;background:#2d2d2d;"></div>
<svg class="r" style="left:1639.4px;top:118.2px;" width="12" height="11.6" viewBox="0 0 14 13"><path d="M7 0.8 L13.4 12 H0.6 Z" fill="#ffd21e" stroke="#ffd21e" stroke-width="1" stroke-linejoin="round"/><rect x="6.3" y="4.2" width="1.5" height="4.4" fill="#1e1e1e"/><rect x="6.3" y="9.6" width="1.5" height="1.5" fill="#1e1e1e"/></svg>
<svg class="r" style="left:1640.5px;top:138px;" width="9.6" height="5.6" viewBox="0 0 9.6 5.6"><polygon points="0,5.6 4.8,0 9.6,5.6" fill="#9a9a9a"/></svg>
<svg class="r" style="left:1640.5px;top:672px;" width="9.6" height="5.6" viewBox="0 0 9.6 5.6"><polygon points="0,0 4.8,5.6 9.6,0" fill="#9a9a9a"/></svg>
<div class="r" style="left:1606px;top:187.4px;width:5.5px;height:338.6px;background:#55b155;"></div>
<div class="r" style="left:1611.5px;top:313.7px;width:73.3px;height:127.8px;background:#000000;border-radius:2px;"></div>
<div class="r" style="left:1606px;top:425.6px;width:79.5px;height:2.2px;background:#ffffff;"></div>
<div class="r" style="left:1675px;top:176.4px;width:10.5px;height:2.3px;background:#c8861a;"></div>
<div class="r" style="left:1675px;top:250px;width:10.5px;height:1.8px;background:#0f8a0f;"></div>
<div class="r" style="left:1675px;top:355.5px;width:10.5px;height:1.8px;background:#0f8a0f;"></div>
<div class="r" style="left:1675px;top:394.5px;width:10.5px;height:1.8px;background:#0f8a0f;"></div>
<div class="r" style="left:1675px;top:430.5px;width:10.5px;height:1.8px;background:#0f8a0f;"></div>
<div class="r" style="left:1675px;top:477.8px;width:10.5px;height:2.3px;background:#c8861a;"></div>
<div class="r" style="left:1675px;top:487.3px;width:10.5px;height:2.3px;background:#c8861a;"></div>
<div class="r" style="left:1675px;top:498.8px;width:10.5px;height:2.3px;background:#c8861a;"></div>
<div class="r" style="left:1606.3px;top:377px;width:4.6px;height:10px;border:1px solid #c9a227;opacity:0.8;"></div>
<div class="r" style="left:1606.3px;top:413.5px;width:4.6px;height:10px;border:1px solid #c9a227;opacity:0.8;"></div>
<div class="r" style="left:1606.3px;top:430px;width:4.6px;height:10px;border:1px solid #c9a227;opacity:0.8;"></div>
<div class="r" style="left:1617px;top:150.2px;width:4px;height:2.2px;background:#d0d0d0;opacity:0.75;"></div>
<div class="r" style="left:1621px;top:150.2px;width:19px;height:2.2px;background:#5f9bd1;opacity:0.55;"></div>
<div class="r" style="left:1621px;top:155.2px;width:35px;height:2.2px;background:#5f9bd1;opacity:0.55;"></div>
<div class="r" style="left:1621px;top:160.4px;width:30px;height:2.2px;background:#5f9bd1;opacity:0.55;"></div>
<div class="r" style="left:1621px;top:166.2px;width:34px;height:2.2px;background:#5f9bd1;opacity:0.55;"></div>
<div class="r" style="left:1621px;top:171.2px;width:38px;height:2.2px;background:#5f9bd1;opacity:0.55;"></div>
<div class="r" style="left:1621px;top:176.7px;width:23px;height:2.2px;background:#4a6d8c;opacity:0.55;"></div>
<div class="r" style="left:1621px;top:181.5px;width:9px;height:2.2px;background:#7aa7cf;opacity:0.55;"></div>
<div class="r" style="left:1620px;top:187.2px;width:26px;height:2.2px;background:#5f9bd1;opacity:0.55;"></div>
<div class="r" style="left:1620px;top:192.3px;width:3px;height:2.2px;background:#bbb;opacity:0.75;"></div>
<div class="r" style="left:1622px;top:203.2px;width:11px;height:2.2px;background:#d0d0d0;opacity:0.75;"></div>
<div class="r" style="left:1624px;top:213.2px;width:10px;height:2.2px;background:#d0d0d0;opacity:0.75;"></div>
<div class="r" style="left:1636px;top:213.2px;width:10px;height:2.2px;background:#b0b0b0;opacity:0.75;"></div>
<div class="r" style="left:1624px;top:219.2px;width:10px;height:2.2px;background:#d0d0d0;opacity:0.75;"></div>
<div class="r" style="left:1636px;top:219.2px;width:10px;height:2.2px;background:#b0b0b0;opacity:0.75;"></div>
<div class="r" style="left:1622px;top:229.3px;width:12px;height:2.2px;background:#d0d0d0;opacity:0.75;"></div>
<div class="r" style="left:1622px;top:240.2px;width:6px;height:2.2px;background:#d0d0d0;opacity:0.75;"></div>
<div class="r" style="left:1624px;top:250.2px;width:8px;height:2.2px;background:#d0d0d0;opacity:0.75;"></div>
<div class="r" style="left:1632px;top:250.2px;width:42px;height:2.2px;background:#5f9bd1;opacity:0.55;"></div>
<div class="r" style="left:1622px;top:261.2px;width:6px;height:2.2px;background:#d0d0d0;opacity:0.75;"></div>
<div class="r" style="left:1622px;top:271.2px;width:10px;height:2.2px;background:#d0d0d0;opacity:0.75;"></div>
<div class="r" style="left:1632px;top:271.2px;width:3px;height:2.2px;background:#5f9bd1;opacity:0.55;"></div>
<div class="r" style="left:1624px;top:282px;width:4px;height:2.2px;background:#d0d0d0;opacity:0.75;"></div>
<div class="r" style="left:1626px;top:293.2px;width:13px;height:2.2px;background:#d0d0d0;opacity:0.75;"></div>
<div class="r" style="left:1628px;top:303.2px;width:10px;height:2.2px;background:#d0d0d0;opacity:0.75;"></div>
<div class="r" style="left:1640px;top:303.2px;width:15px;height:2.2px;background:#b0b0b0;opacity:0.75;"></div>
<div class="r" style="left:1628px;top:309.3px;width:10px;height:2.2px;background:#d0d0d0;opacity:0.75;"></div>
<div class="r" style="left:1640px;top:309.3px;width:15px;height:2.2px;background:#b0b0b0;opacity:0.75;"></div>
<div class="r" style="left:1626px;top:319.3px;width:13px;height:2.2px;background:#e0e0e0;opacity:0.75;"></div>
<div class="r" style="left:1626px;top:330.3px;width:6px;height:2.2px;background:#e0e0e0;opacity:0.75;"></div>
<div class="r" style="left:1628px;top:346.2px;width:9px;height:2.2px;background:#e8e8e8;opacity:0.75;"></div>
<div class="r" style="left:1637px;top:346.2px;width:25px;height:2.2px;background:#5f9bd1;opacity:0.55;"></div>
<div class="r" style="left:1630px;top:356.2px;width:17px;height:2.2px;background:#e0e0e0;opacity:0.75;"></div>
<div class="r" style="left:1628px;top:367.2px;width:8px;height:2.2px;background:#e0e0e0;opacity:0.75;"></div>
<div class="r" style="left:1628px;top:383.2px;width:9px;height:2.2px;background:#e8e8e8;opacity:0.75;"></div>
<div class="r" style="left:1637px;top:383.2px;width:25px;height:2.2px;background:#5f9bd1;opacity:0.55;"></div>
<div class="r" style="left:1630px;top:393.2px;width:15px;height:2.2px;background:#e0e0e0;opacity:0.75;"></div>
<div class="r" style="left:1628px;top:404.2px;width:8px;height:2.2px;background:#e0e0e0;opacity:0.75;"></div>
<div class="r" style="left:1628px;top:420.2px;width:9px;height:2.2px;background:#e8e8e8;opacity:0.75;"></div>
<div class="r" style="left:1637px;top:420.2px;width:25px;height:2.2px;background:#5f9bd1;opacity:0.55;"></div>
<div class="r" style="left:1630px;top:430.3px;width:15px;height:2.2px;background:#e0e0e0;opacity:0.75;"></div>
<div class="r" style="left:1628px;top:441.2px;width:8px;height:2.2px;background:#d0d0d0;opacity:0.75;"></div>
<div class="r" style="left:1626px;top:452.2px;width:6px;height:2.2px;background:#d0d0d0;opacity:0.75;"></div>
<div class="r" style="left:1626px;top:462.2px;width:8px;height:2.2px;background:#d0d0d0;opacity:0.75;"></div>
<div class="r" style="left:1634px;top:462.2px;width:4px;height:2.2px;background:#5f9bd1;opacity:0.55;"></div>
<div class="r" style="left:1628px;top:473.2px;width:4px;height:2.2px;background:#d0d0d0;opacity:0.75;"></div>
<div class="r" style="left:1632px;top:473.2px;width:42px;height:2.2px;background:#5f9bd1;opacity:0.55;"></div>
<div class="r" style="left:1628px;top:478.2px;width:6px;height:2.2px;background:#d0d0d0;opacity:0.75;"></div>
<div class="r" style="left:1634px;top:478.2px;width:40px;height:2.2px;background:#5f9bd1;opacity:0.55;"></div>
<div class="r" style="left:1628px;top:489.2px;width:6px;height:2.2px;background:#d0d0d0;opacity:0.75;"></div>
<div class="r" style="left:1634px;top:489.2px;width:40px;height:2.2px;background:#5f9bd1;opacity:0.55;"></div>
<div class="r" style="left:1628px;top:499.2px;width:6px;height:2.2px;background:#d0d0d0;opacity:0.75;"></div>
<div class="r" style="left:1634px;top:499.2px;width:40px;height:2.2px;background:#5f9bd1;opacity:0.55;"></div>
<div class="r" style="left:1624px;top:510.2px;width:4px;height:2.2px;background:#d0d0d0;opacity:0.75;"></div>
<div class="r" style="left:1622px;top:520.2px;width:6px;height:2.2px;background:#d0d0d0;opacity:0.75;"></div>
<div class="r" style="left:1620px;top:531.2px;width:3px;height:2.2px;background:#d0d0d0;opacity:0.75;"></div>
<div class="r" style="left:1618px;top:536.2px;width:4px;height:2.2px;background:#d0d0d0;opacity:0.75;"></div>
<div class="r" style="left:168px;top:682.8px;width:1517.5px;height:16.4px;background:#2f2f2f;"></div>
<div class="r" style="left:169px;top:683.2px;width:59.5px;height:15.6px;background:#383838;"></div>
<span class="t" style="left:171.4px;top:683.1px;font-size:11.3px;line-height:16px;color:#f2f2f2;letter-spacing:-0.529px;">144 %</span>
<svg class="r" style="left:220px;top:689.6px;" width="5.6" height="3.2" viewBox="0 0 5.6 3.2"><polygon points="0,0 5.6,0 2.8,3.2" fill="#d2d2d2"/></svg>
<svg class="r" style="left:235px;top:686.2px;" width="5.2" height="8.8" viewBox="0 0 5.2 8.8"><polygon points="5.2,0 5.2,8.8 0,4.4" fill="#9a9a9a"/></svg>
<div class="r" style="left:250.8px;top:687.2px;width:838px;height:6.8px;background:#4d4d4d;"></div>
<svg class="r" style="left:1484.6px;top:686.2px;" width="5.2" height="8.8" viewBox="0 0 5.2 8.8"><polygon points="0,0 0,8.8 5.2,4.4" fill="#9a9a9a"/></svg>
<span class="t" style="left:1518px;top:683.2px;font-size:11.3px;line-height:16px;color:#f2f2f2;letter-spacing:-0.287px;">Ln: 53</span>
<span class="t" style="left:1566px;top:683.2px;font-size:11.3px;line-height:16px;color:#f2f2f2;letter-spacing:-0.403px;">Ch: 1</span>
<div class="r" style="left:1601.5px;top:683.4px;width:37.8px;height:15.4px;background:#2d2d2d;border:1px solid #3c3c3c;"></div>
<span class="t" style="left:1611px;top:683.2px;font-size:11.3px;line-height:16px;color:#f2f2f2;letter-spacing:-1.511px;">SPC</span>
<div class="r" style="left:1640.4px;top:683.4px;width:44.2px;height:15.4px;background:#2d2d2d;border:1px solid #3c3c3c;"></div>
<span class="t" style="left:1650.5px;top:683.2px;font-size:11.3px;line-height:16px;color:#f2f2f2;letter-spacing:-1.250px;">CRLF</span>
<!-- part_designer -->
<div class="r" style="left:168px;top:699.2px;width:1517.5px;height:21.6px;background:#2b2b2b;"></div>
<svg class="r" style="left:177.6px;top:699.2px;" width="79" height="17.6" viewBox="0 0 79 17.6"><path d="M0 0 H78.4 L62 15.6 Q60 17.6 57.6 17.6 H2.4 Q0 17.6 0 15.2 Z" fill="#353535"/></svg>
<svg class="r" style="left:184.2px;top:703.6px;" width="8.6" height="8" viewBox="0 0 8.6 8"><rect x="0.5" y="0.5" width="7.6" height="7" fill="none" stroke="#d2d2d2" stroke-width="1"/><path d="M3.4 2.4 L2.2 4 L3.4 5.6 M5.2 2.4 L6.4 4 L5.2 5.6" fill="none" stroke="#d2d2d2" stroke-width="0.8"/></svg>
<span class="t" style="left:196.7px;top:700px;font-size:12.4px;line-height:17px;color:#f2f2f2;letter-spacing:-0.438px;">XAML</span>
<svg class="r" style="left:256.5px;top:704px;" width="12.4" height="11.4" viewBox="0 0 12.4 11.4"><path d="M3 11 V1 M0.6 3.4 L3 1 L5.4 3.4 M9.2 0.4 V10.4 M6.8 8 L9.2 10.4 L11.6 8" fill="none" stroke="#d2d2d2" stroke-width="1.6"/></svg>
<svg class="r" style="left:275.6px;top:701.8px;" width="74" height="19" viewBox="0 0 74 19"><polygon points="14,0 74,0 74,19 0,19" fill="#252525"/></svg>
<svg class="r" style="left:294.3px;top:706.5px;" width="11" height="11" viewBox="0 0 11 11"><rect x="0.5" y="0.5" width="8.6" height="8.4" fill="none" stroke="#d2d2d2" stroke-width="1"/><rect x="0.5" y="0.5" width="8.6" height="2" fill="#d2d2d2"/><circle cx="8.2" cy="8.2" r="2.2" fill="#252525" stroke="#d2d2d2" stroke-width="1"/></svg>
<span class="t" style="left:308.5px;top:704.7px;font-size:12.4px;line-height:17px;color:#f2f2f2;letter-spacing:-0.563px;">Design</span>
<svg class="r" style="left:357.3px;top:704.7px;" width="12" height="12" viewBox="0 0 12 12"><path d="M5.6 1.8 H0.6 V11 H9.8 V6.4" fill="none" stroke="#d2d2d2" stroke-width="1.1"/><path d="M5.4 6.2 L10.6 1 M7 0.7 H11 V4.8" fill="none" stroke="#55aaff" stroke-width="1.4"/></svg>
<div class="r" style="left:1653.6px;top:702.6px;width:14.4px;height:14px;border:1px solid #5a5a5a;"></div>
<svg class="r" style="left:1640px;top:704px;" width="10.8" height="10.8" viewBox="0 0 10.8 10.8"><rect x="0.65" y="0.65" width="9.5" height="9.5" fill="none" stroke="#f0f0f0" stroke-width="1.3"/><path d="M5.4 2 V8.8" stroke="#f0f0f0" stroke-width="1.1"/></svg>
<svg class="r" style="left:1655.4px;top:704px;" width="10.8" height="10.8" viewBox="0 0 10.8 10.8"><rect x="0.65" y="0.65" width="9.5" height="9.5" fill="none" stroke="#f0f0f0" stroke-width="1.3"/><path d="M2 5.4 H8.8" stroke="#f0f0f0" stroke-width="1.1"/></svg>
<svg class="r" style="left:1670.2px;top:704px;" width="10.8" height="10.8" viewBox="0 0 10.8 10.8"><rect x="0.65" y="0.65" width="9.5" height="9.5" fill="none" stroke="#f0f0f0" stroke-width="1.3"/><path d="M2.8 2.4 L5.4 4.8 L8 2.4 M2.8 5.6 L5.4 8 L8 5.6" fill="none" stroke="#f0f0f0" stroke-width="1.1"/></svg>
<div class="r" style="left:168px;top:720.8px;width:1517.5px;height:271px;background:#1a1a1a;"></div>
<div class="r" style="left:359px;top:720.8px;width:533.3px;height:255.6px;background:#ffffff;"></div>
<div class="r" style="left:359px;top:735.6px;width:268px;height:256.1px;border:1px solid #a8a8a8;border-bottom:none;"></div>
<div class="r" style="left:392.9px;top:751px;width:8px;height:8px;background:#ffffff;border:0.8px solid #555;border-radius:50%;"></div>
<span class="t" style="left:405px;top:749.9px;font-size:8.2px;line-height:11px;color:#333;letter-spacing:-0.188px;">Vermell</span>
<div class="r" style="left:392.9px;top:827.2px;width:8px;height:8px;background:#ffffff;border:0.8px solid #555;border-radius:50%;"></div>
<span class="t" style="left:405px;top:826.1px;font-size:8.2px;line-height:11px;color:#333;letter-spacing:-0.287px;">Groc</span>
<div class="r" style="left:392.9px;top:904px;width:8px;height:8px;background:#ffffff;border:0.8px solid #555;border-radius:50%;"></div>
<span class="t" style="left:405px;top:902.9px;font-size:8.2px;line-height:11px;color:#333;letter-spacing:-0.211px;">Verd</span>
<div class="r" style="left:390.4px;top:902.4px;width:169.8px;height:11.6px;border:1px solid #6a9ef0;"></div>
<div class="r" style="left:387.2px;top:898.4px;width:4.8px;height:4.8px;background:#ffffff;border:1px solid #6a9ef0;"></div>
<div class="r" style="left:387.2px;top:913.2px;width:4.8px;height:4.8px;background:#ffffff;border:1px solid #6a9ef0;"></div>
<div class="r" style="left:473px;top:898.4px;width:4.8px;height:4.8px;background:#ffffff;border:1px solid #6a9ef0;"></div>
<div class="r" style="left:473px;top:913.2px;width:4.8px;height:4.8px;background:#ffffff;border:1px solid #6a9ef0;"></div>
<div class="r" style="left:559.2px;top:898.4px;width:4.8px;height:4.8px;background:#ffffff;border:1px solid #6a9ef0;"></div>
<div class="r" style="left:559.2px;top:913.2px;width:4.8px;height:4.8px;background:#ffffff;border:1px solid #6a9ef0;"></div>
<svg class="r" style="left:690px;top:780px;overflow:hidden;" width="140" height="196.4" viewBox="0 0 140 196.4"><defs>
<linearGradient id="tlb" x1="0" x2="1" y1="0" y2="0"><stop offset="0" stop-color="#4a4a4a"/><stop offset="0.08" stop-color="#2c2c2c"/><stop offset="0.5" stop-color="#242424"/><stop offset="0.9" stop-color="#3a3a3a"/><stop offset="1" stop-color="#8a8a8a"/></linearGradient>
<linearGradient id="tlw" x1="0" x2="1" y1="0" y2="0.5"><stop offset="0" stop-color="#505050"/><stop offset="0.55" stop-color="#868686"/><stop offset="0.85" stop-color="#9a9a9a"/><stop offset="1" stop-color="#5a5a5a"/></linearGradient>
<linearGradient id="tlw2" x1="1" x2="0" y1="0" y2="0.5"><stop offset="0" stop-color="#505050"/><stop offset="0.55" stop-color="#868686"/><stop offset="0.85" stop-color="#9a9a9a"/><stop offset="1" stop-color="#5a5a5a"/></linearGradient>
<linearGradient id="tlp" x1="0" x2="1" y1="0" y2="0"><stop offset="0" stop-color="#2a2a2a"/><stop offset="0.5" stop-color="#6a6a6a"/><stop offset="1" stop-color="#2a2a2a"/></linearGradient>
<radialGradient id="gr" cx="0.5" cy="0.5" r="0.5"><stop offset="0.72" stop-color="#d01822"/><stop offset="0.86" stop-color="#c21a24" stop-opacity="0.75"/><stop offset="1" stop-color="#a01018" stop-opacity="0"/></radialGradient>
<radialGradient id="gy" cx="0.5" cy="0.5" r="0.5"><stop offset="0.72" stop-color="#e6d020"/><stop offset="0.86" stop-color="#cfc030" stop-opacity="0.75"/><stop offset="1" stop-color="#a09a20" stop-opacity="0"/></radialGradient>
<radialGradient id="gg" cx="0.5" cy="0.5" r="0.5"><stop offset="0.72" stop-color="#18d028"/><stop offset="0.86" stop-color="#20c030" stop-opacity="0.75"/><stop offset="1" stop-color="#109020" stop-opacity="0"/></radialGradient>
<filter id="tls" x="-20%" y="-10%" width="140%" height="120%"><feGaussianBlur stdDeviation="3"/></filter>
</defs><g filter="url(#tls)" opacity="0.2"><rect x="38" y="22" width="64" height="152" fill="#444"/><rect x="24" y="32" width="96" height="34" fill="#555"/><rect x="24" y="83" width="96" height="34" fill="#555"/><rect x="24" y="135" width="96" height="34" fill="#555"/></g><rect x="60.5" y="166.4" width="10.8" height="30" fill="url(#tlp)"/><rect x="53" y="6" width="25.6" height="8" rx="1.5" fill="url(#tlp)"/><path d="M11.5 15.8 L39 20.6 L39 61.8 C29 59.8 33 29.8 12.2 18.4 Z" fill="url(#tlw)"/><path d="M121.7 15.8 L94 20.6 L94 61.8 C104 59.8 100 29.8 121 18.4 Z" fill="url(#tlw2)"/><path d="M11.5 66.9 L39 71.7 L39 112.9 C29 110.9 33 80.9 12.2 69.5 Z" fill="url(#tlw)"/><path d="M121.7 66.9 L94 71.7 L94 112.9 C104 110.9 100 80.9 121 69.5 Z" fill="url(#tlw2)"/><path d="M11.5 119.5 L39 124.3 L39 165.5 C29 163.5 33 133.5 12.2 122.1 Z" fill="url(#tlw)"/><path d="M121.7 119.5 L94 124.3 L94 165.5 C104 163.5 100 133.5 121 122.1 Z" fill="url(#tlw2)"/><rect x="37.7" y="13" width="56.9" height="154.9" rx="2" fill="url(#tlb)"/><rect x="37.7" y="65.6" width="56.9" height="1.1" fill="#c8c8c8"/><rect x="37.7" y="64.4" width="56.9" height="1.2" fill="#111"/><rect x="37.7" y="117.4" width="56.9" height="1.1" fill="#c8c8c8"/><rect x="37.7" y="116.2" width="56.9" height="1.2" fill="#111"/><defs><filter id="tlg" x="-40%" y="-40%" width="180%" height="180%"><feGaussianBlur stdDeviation="2.2"/></filter><clipPath id="tlc"><rect x="37.7" y="13" width="56.9" height="172"/></clipPath></defs><g clip-path="url(#tlc)"><ellipse cx="66.3" cy="45.3" rx="24" ry="22.5" fill="#d4202a" filter="url(#tlg)" opacity="0.9"/></g><defs><clipPath id="tlh821"><rect x="36.3" y="11.8" width="60" height="28"/></clipPath></defs><g clip-path="url(#tlh821)"><circle cx="66.3" cy="38.8" r="22" fill="none" stroke="#dcdcdc" stroke-width="0.7"/><circle cx="66.3" cy="38.8" r="21.4" fill="#6e0a12"/><circle cx="66.3" cy="40.4" r="20.4" fill="#b01822"/></g><circle cx="66.3" cy="41.8" r="20.3" fill="none" stroke="#e02430" stroke-width="1.4" opacity="0.9"/><circle cx="66.3" cy="41.8" r="19.5" fill="#ffffff"/><g clip-path="url(#tlc)"><ellipse cx="66.3" cy="96.4" rx="24" ry="22.5" fill="#c8c422" filter="url(#tlg)" opacity="0.9"/></g><defs><clipPath id="tlh872"><rect x="36.3" y="62.9" width="60" height="28"/></clipPath></defs><g clip-path="url(#tlh872)"><circle cx="66.3" cy="89.9" r="22" fill="none" stroke="#dcdcdc" stroke-width="0.7"/><circle cx="66.3" cy="89.9" r="21.4" fill="#7a5a08"/><circle cx="66.3" cy="91.5" r="20.4" fill="#d89a10"/></g><circle cx="66.3" cy="92.9" r="20.3" fill="none" stroke="#e8dc20" stroke-width="1.4" opacity="0.9"/><circle cx="66.3" cy="92.9" r="19.5" fill="#ffffff"/><g clip-path="url(#tlc)"><ellipse cx="66.3" cy="147.5" rx="24" ry="22.5" fill="#1fd030" filter="url(#tlg)" opacity="0.9"/></g><defs><clipPath id="tlh924"><rect x="36.3" y="114" width="60" height="28"/></clipPath></defs><g clip-path="url(#tlh924)"><circle cx="66.3" cy="141" r="22" fill="none" stroke="#dcdcdc" stroke-width="0.7"/><circle cx="66.3" cy="141" r="21.4" fill="#0a5a14"/><circle cx="66.3" cy="142.6" r="20.4" fill="#14a028"/></g><circle cx="66.3" cy="144" r="20.3" fill="none" stroke="#20e038" stroke-width="1.4" opacity="0.9"/><circle cx="66.3" cy="144" r="19.5" fill="#ffffff"/></svg>
<div class="r" style="left:1668.3px;top:720.8px;width:17.2px;height:271px;background:#2e2e2e;"></div>
<svg class="r" style="left:1672px;top:725.6px;" width="9.6" height="5.6" viewBox="0 0 9.6 5.6"><polygon points="0,5.6 4.8,0 9.6,5.6" fill="#9a9a9a"/></svg>
<svg class="r" style="left:1672px;top:981px;" width="9.6" height="5.6" viewBox="0 0 9.6 5.6"><polygon points="0,0 4.8,5.6 9.6,0" fill="#9a9a9a"/></svg>
<div class="r" style="left:1672.2px;top:797px;width:8.8px;height:153px;background:#4d4d4d;"></div>
<div class="r" style="left:168px;top:991.7px;width:1517.5px;height:18.3px;background:#2e2e2e;"></div>
<div class="r" style="left:168px;top:991.7px;width:226px;height:18.3px;background:#1f1f1f;"></div>
<div class="r" style="left:169.2px;top:991.6px;width:61.6px;height:17.4px;background:#333333;"></div>
<div class="r" style="left:218.2px;top:991.6px;width:0.8px;height:17.4px;background:#3d3d3d;"></div>
<span class="t" style="left:174.7px;top:993px;font-size:12.4px;line-height:17px;color:#f2f2f2;letter-spacing:-0.505px;">66,67%</span>
<svg class="r" style="left:221.6px;top:998.6px;" width="5.8" height="3.4" viewBox="0 0 5.8 3.4"><polygon points="0,0 5.8,0 2.9,3.4" fill="#d2d2d2"/></svg>
<svg class="r" style="left:239.5px;top:996px;" width="9" height="10" viewBox="0 0 9 10"><path d="M6.6 2.6 A3.4 3.4 0 1 0 7.6 6" fill="none" stroke="#d2d2d2" stroke-width="1.5"/><polygon points="4.6,0.2 8.2,1.6 5.6,4.2" fill="#d2d2d2"/></svg>
<div class="r" style="left:253.8px;top:992px;width:22.4px;height:16.8px;background:#1f1f1f;border:1.2px solid #7160e8;"></div>
<span class="t" style="left:257.6px;top:991.2px;font-family:'Liberation Serif',serif;font-style:italic;font-weight:700;font-size:15px;line-height:17px;color:#d2d2d2">fx</span>
<svg class="r" style="left:280.8px;top:995.8px;" width="14.6" height="9.4" viewBox="0 0 14.6 9.4"><rect x="0" y="0" width="4" height="4" fill="#d2d2d2"/><rect x="0" y="5.2" width="4" height="4" fill="#d2d2d2"/><rect x="5.2" y="0" width="4" height="4" fill="#d2d2d2"/><rect x="5.2" y="5.2" width="4" height="4" fill="#d2d2d2"/><rect x="10.4" y="0" width="4" height="4" fill="#d2d2d2"/><rect x="10.4" y="5.2" width="4" height="4" fill="#d2d2d2"/></svg>
<svg class="r" style="left:303.7px;top:995.8px;" width="14.6" height="9.4" viewBox="0 0 14.6 9.4"><rect x="0" y="0" width="14.6" height="9.4" fill="#d2d2d2"/><path d="M4.2 0 V9.4 M10.4 0 V9.4 M0 4.7 H14.6" stroke="#2e2e2e" stroke-width="1.2"/><circle cx="4.6" cy="4.7" r="2.7" fill="#d2d2d2" stroke="#2e2e2e" stroke-width="1"/><circle cx="4.6" cy="4.7" r="1.2" fill="#2e2e2e"/></svg>
<svg class="r" style="left:327.5px;top:995px;" width="12.8" height="11.6" viewBox="0 0 12.8 11.6"><rect x="0" y="0" width="12.8" height="11.6" fill="#d2d2d2"/><rect x="0.8" y="0.4" width="2" height="2" fill="#2e2e2e"/><rect x="2.7" y="2.2" width="2" height="2" fill="#2e2e2e"/><rect x="4.6" y="4" width="2" height="2" fill="#2e2e2e"/><rect x="6.5" y="5.8" width="2" height="2" fill="#2e2e2e"/><rect x="8.4" y="7.6" width="2" height="2" fill="#2e2e2e"/><rect x="10.3" y="9.4" width="2" height="2" fill="#2e2e2e"/></svg>
<div class="r" style="left:346.2px;top:992px;width:21.6px;height:16.8px;background:#1f1f1f;border:1.2px solid #7160e8;"></div>
<svg class="r" style="left:350.5px;top:994.4px;" width="14" height="12" viewBox="0 0 14 12"><path d="M5.2 0 V12 M0 6 H13.4" stroke="#d2d2d2" stroke-width="1.1"/><circle cx="5.2" cy="6" r="2" fill="#1f1f1f" stroke="#d2d2d2" stroke-width="1.1"/></svg>
<div class="r" style="left:369.4px;top:992px;width:21.8px;height:16.8px;background:#1f1f1f;border:1.2px solid #7160e8;"></div>
<svg class="r" style="left:374.6px;top:994px;" width="12" height="13.4" viewBox="0 0 12 13.4"><path d="M2 7 V0.6 H7 L10 3.4 V7" fill="none" stroke="#d2d2d2" stroke-width="1.1"/><path d="M6 2.4 V5.6 H8.4 M4.6 4 L6 2.4 L7.4 4" fill="none" stroke="#d2d2d2" stroke-width="0.9"/><rect x="4" y="8.2" width="4" height="4" fill="#55aaff"/><path d="M2.2 8.6 L0.8 10.4 L2.2 12.2 M9.8 8.6 L11.2 10.4 L9.8 12.2" fill="none" stroke="#d2d2d2" stroke-width="0.9"/></svg>
<svg class="r" style="left:397px;top:996.6px;" width="5.4" height="8.6" viewBox="0 0 5.4 8.6"><polygon points="5.4,0 5.4,8.6 0,4.3" fill="#9a9a9a"/></svg>
<svg class="r" style="left:1656.8px;top:996.2px;" width="5.4" height="8.8" viewBox="0 0 5.4 8.8"><polygon points="0,0 0,8.6 5.4,4.3" fill="#9a9a9a"/></svg>
<div class="r" style="left:788px;top:996.1px;width:795px;height:8.7px;background:#4d4d4d;"></div>
<div class="r" style="left:1668.3px;top:991.7px;width:17.2px;height:18.3px;background:#2e2e2e;"></div>
<div class="r" style="left:168px;top:1009.4px;width:1518px;height:1px;background:#3a3a3a;"></div>
<div class="r" style="left:1685px;top:94px;width:1px;height:916.4px;background:#363636;"></div>
<div class="r" style="left:168px;top:94px;width:1px;height:916.4px;background:#363636;"></div>
<!-- part_solexp -->
<div class="r" style="left:1692px;top:72px;width:222px;height:919.2px;background:#1f1f1f;border:1px solid #3d3d3d;"></div>
<span class="t" style="left:1697.2px;top:76.2px;font-size:12.4px;line-height:17px;color:#d0d0d0;letter-spacing:-0.268px;">Solution Explorer</span>
<svg class="r" style="left:1865.05px;top:81px;" width="7.5" height="4" viewBox="0 0 7.5 4"><polygon points="0,0 7.5,0 3.75,4" fill="#d2d2d2"/></svg>
<svg class="r" style="left:1881.5px;top:78px;" width="8" height="11" viewBox="0 0 8 11"><path d="M2 0.5 H6 M2.5 0.5 V5.5 M5.5 0.5 V5.5 M5 0.5 V5.5 M0.5 6 H7.5 M4 6 V10.5" fill="none" stroke="#d2d2d2" stroke-width="1"/></svg>
<svg class="r" style="left:1897.6px;top:78.8px;" width="9" height="9" viewBox="0 0 9 9"><path d="M0.5 0.5 L8.5 8.5 M8.5 0.5 L0.5 8.5" stroke="#d2d2d2" stroke-width="1.3"/></svg>
<svg class="r" style="left:1700.8px;top:101.4px;" width="13.2" height="13.2" viewBox="0 0 13.2 13.2"><circle cx="6.6" cy="6.6" r="6" fill="none" stroke="#404040" stroke-width="1"/><path d="M10 6.6 H3.4 M6 4 L3.4 6.6 L6 9.2" fill="none" stroke="#404040" stroke-width="1"/></svg>
<svg class="r" style="left:1722.8px;top:101.4px;" width="13.2" height="13.2" viewBox="0 0 13.2 13.2"><circle cx="6.6" cy="6.6" r="6" fill="none" stroke="#404040" stroke-width="1"/><path d="M3.2 6.6 H9.8 M7.2 4 L9.8 6.6 L7.2 9.2" fill="none" stroke="#404040" stroke-width="1"/></svg>
<svg class="r" style="left:1744.5px;top:101.6px;" width="14.4" height="13.4" viewBox="0 0 14.4 13.4"><path d="M0.6 7 L7.2 0.8 L13.8 7 M2.6 5.4 V12.8 H5.8 V8.4 H8.6 V12.8 H11.8 V5.4" fill="none" stroke="#d2d2d2" stroke-width="1.2"/></svg>
<svg class="r" style="left:1772.2px;top:101.1px;" width="9" height="11" viewBox="0 0 9 11"><rect x="0.5" y="0.5" width="8" height="9.8" fill="#1f1f1f" stroke="#d2d2d2" stroke-width="1"/><rect x="1.9" y="2.6" width="1.3" height="1.3" fill="#d2d2d2"/><rect x="4" y="2.7" width="3.4" height="1.1" fill="#d2d2d2"/><rect x="1.9" y="5.2" width="1.3" height="1.3" fill="#d2d2d2"/><rect x="4" y="5.3" width="3.4" height="1.1" fill="#d2d2d2"/><rect x="1.9" y="7.8" width="1.3" height="1.3" fill="#d2d2d2"/><rect x="4" y="7.9" width="3.4" height="1.1" fill="#d2d2d2"/></svg>
<svg class="r" style="left:1765.4px;top:106.8px;" width="9.9" height="9.5" viewBox="0 0 22 21"><path d="M14.9 0.2 L20.8 3.8 V17.1 L14.9 20.6 L8.6 14.6 L4.5 17.5 L0.6 14.6 V6.5 L4.5 3.7 L8.6 6.6 Z M15.8 7.2 V13.9 L12.2 10.6 Z M3.3 8.2 V12.9 L5.7 10.6 Z" fill="#a074e6" stroke="#1f1f1f" stroke-width="1.2" paint-order="stroke" fill-rule="evenodd"/></svg>
<div class="r" style="left:1788.2px;top:98px;width:1px;height:20px;background:#3f3f3f;"></div>
<svg class="r" style="left:1796.5px;top:100px;" width="15" height="16" viewBox="0 0 15 16"><polygon points="0,0.4 5.6,0.4 3.6,2.8 3.6,5 2,5 2,2.8" fill="#55aaff"/><circle cx="9" cy="10" r="5" fill="none" stroke="#d2d2d2" stroke-width="1.2"/><path d="M9 7 V10.2 H11.6" fill="none" stroke="#d2d2d2" stroke-width="1.1"/></svg>
<svg class="r" style="left:1819px;top:106.7px;" width="6" height="3.4" viewBox="0 0 6 3.4"><polygon points="0,0 6,0 3,3.4" fill="#d2d2d2"/></svg>
<svg class="r" style="left:1832.4px;top:102.6px;" width="13.2" height="10.8" viewBox="0 0 13.2 10.8"><path d="M13 2.8 H0.8 M3.4 0.4 L0.8 2.8 L3.4 5.2 M0.2 8 H12.4 M9.8 5.6 L12.4 8 L9.8 10.4" fill="none" stroke="#d2d2d2" stroke-width="0.95"/></svg>
<svg class="r" style="left:1853.8px;top:100.6px;" width="15.4" height="14.6" viewBox="0 0 15.4 14.6"><path d="M2.6 2.6 V0.6 H14.6 V11.6 H12.6" fill="none" stroke="#d2d2d2" stroke-width="1.1"/><rect x="0.6" y="2.8" width="11.8" height="11" fill="none" stroke="#d2d2d2" stroke-width="1.1"/><path d="M3 8.2 H10" stroke="#d2d2d2" stroke-width="1.2"/></svg>
<svg class="r" style="left:1875.6px;top:101px;" width="15" height="14.4" viewBox="0 0 15 14.4"><rect x="4.6" y="0.6" width="9.4" height="9.4" fill="none" stroke="#d2d2d2" stroke-width="1.1"/><rect x="0.6" y="3.6" width="9.4" height="10" fill="#1f1f1f" stroke="#d2d2d2" stroke-width="1.1"/><path d="M4.6 3.6 V10 H10" fill="none" stroke="#555" stroke-width="1"/></svg>
<svg class="r" style="left:1905px;top:98.6px;" width="6" height="3.6" viewBox="0 0 6 3.6"><polygon points="0.2,0 2.4,1.8 0.2,3.6" fill="#d2d2d2"/><polygon points="3.4,0 5.6,1.8 3.4,3.6" fill="#d2d2d2"/></svg>
<div class="r" style="left:1693px;top:122.4px;width:220px;height:20.4px;background:#383838;border:1px solid #424242;"></div>
<span class="t" style="left:1698.3px;top:125.2px;font-size:12.4px;line-height:17px;color:#d6d6d6;letter-spacing:-0.398px;">Search Solution Explorer</span>
<svg class="r" style="left:1884.8px;top:125.4px;" width="14" height="14" viewBox="0 0 14 14"><circle cx="9" cy="4.8" r="3.5" fill="none" stroke="#d2d2d2" stroke-width="1.8"/><path d="M6.4 7.4 L1.4 12.4" stroke="#d2d2d2" stroke-width="2.4" stroke-linecap="round"/></svg>
<svg class="r" style="left:1903px;top:130.9px;" width="6" height="3.4" viewBox="0 0 6 3.4"><polygon points="0,0 6,0 3,3.4" fill="#d2d2d2"/></svg>
<div class="r" style="left:1693px;top:164.2px;width:220px;height:18.8px;background:#383838;"></div>
<svg class="r" style="left:1707.5px;top:147px;" width="16" height="15" viewBox="0 0 16 15"><path d="M5 11.6 H0.6 V0.8 H11 V6" fill="none" stroke="#d2d2d2" stroke-width="1.1"/><path d="M0.6 3.4 H11" stroke="#d2d2d2" stroke-width="1.1"/><path d="M12.6 5.6 L14.4 6.4 V13.4 L12.6 14.2 L8 10.6 L6.4 11.8 L5.4 11.4 V8.4 L6.4 8 L8 9.2 Z M12.4 8 L9.6 9.9 L12.4 11.8 Z" fill="#b180d7" fill-rule="evenodd"/></svg>
<div class="r" style="left:1728px;top:145px;width:185px;height:19px;overflow:hidden"><span class="t" style="left:0px;top:2.1px;font-size:12.4px;line-height:17px;color:#f2f2f2;letter-spacing:-0.239px;">Solution 'S12RadioButton' (1 of 1 project)</span></div>
<svg class="r" style="left:1703.8px;top:171px;" width="6.6" height="6.6" viewBox="0 0 6.6 6.6"><polygon points="6.4,0 6.4,6.4 0,6.4" fill="#f2f2f2"/></svg>
<svg class="r" style="left:1725.8px;top:167px;" width="14.6" height="13.4" viewBox="0 0 14.6 13.4"><rect x="0.6" y="0.6" width="13.4" height="12.2" fill="none" stroke="#d2d2d2" stroke-width="1.1"/></svg>
<span class="t" style="left:1727.6px;top:168.7px;font-size:9.4px;line-height:12px;color:#7fd47f;font-weight:700;letter-spacing:-0.692px;">C#</span>
<span class="t" style="left:1746px;top:166.6px;font-size:12.4px;line-height:17px;color:#ffffff;font-weight:700;letter-spacing:-0.384px;">S12RadioButton</span>
<svg class="r" style="left:1721.6px;top:188.1px;" width="6.4" height="9.2" viewBox="0 0 6.4 9.2"><polygon points="0.6,0.6 5.6,4.6 0.6,8.6" fill="none" stroke="#d2d2d2" stroke-width="1"/></svg>
<svg class="r" style="left:1742.7px;top:186.6px;" width="16.4" height="11" viewBox="0 0 16.4 11"><rect x="3.6" y="1.2" width="3.6" height="3.6" fill="none" stroke="#d2d2d2" stroke-width="1.1"/><rect x="0.6" y="5.4" width="3.6" height="3.6" fill="none" stroke="#d2d2d2" stroke-width="1.1"/><rect x="9" y="1" width="6.6" height="8.2" fill="none" stroke="#d2d2d2" stroke-width="1.1"/><path d="M4.2 7.2 H9 M7.2 3 H9" stroke="#d2d2d2" stroke-width="1.4"/></svg>
<span class="t" style="left:1764px;top:185.1px;font-size:12.4px;line-height:17px;color:#f2f2f2;letter-spacing:-0.436px;">Dependencies</span>
<svg class="r" style="left:1721.6px;top:207.3px;" width="6.4" height="9.2" viewBox="0 0 6.4 9.2"><polygon points="0.6,0.6 5.6,4.6 0.6,8.6" fill="none" stroke="#d2d2d2" stroke-width="1"/></svg>
<svg class="r" style="left:1742.6px;top:204px;" width="16" height="16" viewBox="0 0 16 16"><path d="M3 9 V1.2 H9.6 L13 4.6 V14.4 H11.6" fill="none" stroke="#d2d2d2" stroke-width="1.1"/><rect x="5.4" y="10.4" width="3.6" height="3.6" fill="#55aaff"/><path d="M3.4 10 L1.2 12.2 L3.4 14.4 M11 10 L13.2 12.2 L11 14.4" fill="none" stroke="#d2d2d2" stroke-width="1"/></svg>
<span class="t" style="left:1764px;top:204.3px;font-size:12.4px;line-height:17px;color:#f2f2f2;letter-spacing:-0.082px;">App.xaml</span>
<span class="t" style="left:1743.6px;top:224.5px;font-size:12.6px;line-height:14px;color:#7fd47f;letter-spacing:-0.855px;">C#</span>
<span class="t" style="left:1764px;top:223.3px;font-size:12.4px;line-height:17px;color:#f2f2f2;letter-spacing:-0.281px;">AssemblyInfo.cs</span>
<svg class="r" style="left:1721.6px;top:245.3px;" width="6.4" height="9.2" viewBox="0 0 6.4 9.2"><polygon points="0.6,0.6 5.6,4.6 0.6,8.6" fill="none" stroke="#d2d2d2" stroke-width="1"/></svg>
<svg class="r" style="left:1742.6px;top:242px;" width="16" height="16" viewBox="0 0 16 16"><path d="M3 9 V1.2 H9.6 L13 4.6 V14.4 H11.6" fill="none" stroke="#d2d2d2" stroke-width="1.1"/><rect x="5.4" y="10.4" width="3.6" height="3.6" fill="#55aaff"/><path d="M3.4 10 L1.2 12.2 L3.4 14.4 M11 10 L13.2 12.2 L11 14.4" fill="none" stroke="#d2d2d2" stroke-width="1"/></svg>
<span class="t" style="left:1764px;top:242.3px;font-size:12.4px;line-height:17px;color:#f2f2f2;letter-spacing:0.009px;">MainWindow.xaml</span>
<div class="r" style="left:1693px;top:972.8px;width:220px;height:17.4px;background:#2b2b2b;"></div>
<svg class="r" style="left:1700.4px;top:977.4px;" width="5.2" height="8.6" viewBox="0 0 5.2 8.6"><polygon points="5.2,0 5.2,8.6 0,4.3" fill="#9a9a9a"/></svg>
<svg class="r" style="left:1901.6px;top:977.4px;" width="5.2" height="8.6" viewBox="0 0 5.2 8.6"><polygon points="0,0 0,8.6 5.2,4.3" fill="#9a9a9a"/></svg>
<div class="r" style="left:1710px;top:977.6px;width:162px;height:7.8px;background:#4d4d4d;"></div>
<div class="r" style="left:1692px;top:990.2px;width:102px;height:20.2px;background:#1f1f1f;border:1px solid #3d3d3d;border-top:none;"></div>
<span class="t" style="left:1697.9px;top:991.8px;font-size:12.4px;line-height:17px;color:#ffffff;letter-spacing:-0.268px;">Solution Explorer</span>
<span class="t" style="left:1800.6px;top:991.8px;font-size:12.4px;line-height:17px;color:#9c9c9c;letter-spacing:-0.250px;">Diagnostic Tools</span>
<!-- part_bottom -->
<div class="r" style="left:0px;top:1017px;width:1920px;height:23.4px;background:#424242;"></div>
<svg class="r" style="left:4px;top:1021.4px;" width="16" height="16" viewBox="0 0 16 16"><path d="M0.6 0.8 H14.6 V10.4 H8.6 L6.6 12.6 L4.6 10.4 H0.6 Z" fill="none" stroke="#d2d2d2" stroke-width="1.1"/><path d="M3 4.2 H8.4 M3 6.8 H7" stroke="#d2d2d2" stroke-width="1"/><path d="M9.6 4.4 L10.8 5.6 L12.8 3" fill="none" stroke="#d2d2d2" stroke-width="0.9"/></svg>
<span class="t" style="left:28.6px;top:1020.8px;font-size:12.4px;line-height:17px;color:#f2f2f2;letter-spacing:-0.566px;">Ready</span>
<svg class="r" style="left:1492px;top:1021.6px;" width="12" height="13.4" viewBox="0 0 12 13.4"><path d="M6 13 V1 M1 6 L6 1 L11 6" fill="none" stroke="#d2d2d2" stroke-width="1.1"/></svg>
<span class="t" style="left:1512px;top:1020.8px;font-size:12.4px;line-height:17px;color:#f2f2f2;letter-spacing:-0.163px;">Add to Source Control</span>
<svg class="r" style="left:1636px;top:1026.4px;" width="7.4" height="4" viewBox="0 0 7.4 4"><polygon points="0,4 3.7,0 7.4,4" fill="#d2d2d2"/></svg>
<svg class="r" style="left:1666.6px;top:1022px;" width="14" height="13.6" viewBox="0 0 14 13.6"><path d="M0.6 0.8 H13.4 V3.6 H0.6 Z M1.8 3.6 V13 H12.2 V3.6 M5 6 H9 V9.4 H5 Z" fill="none" stroke="#d2d2d2" stroke-width="1.1"/></svg>
<span class="t" style="left:1688px;top:1020.8px;font-size:12.4px;line-height:17px;color:#f2f2f2;letter-spacing:-0.401px;">Select Repository</span>
<svg class="r" style="left:1785px;top:1026.4px;" width="7.4" height="4" viewBox="0 0 7.4 4"><polygon points="0,4 3.7,0 7.4,4" fill="#d2d2d2"/></svg>
<svg class="r" style="left:1813.6px;top:1021px;" width="14" height="15" viewBox="0 0 14 15"><path d="M2.4 11 C3.6 9.6 3 7.2 3.6 5 C4.2 2.6 5.6 1.4 7 1.4 C8.4 1.4 9.8 2.6 10.4 5 C11 7.2 10.4 9.6 11.6 11 Z" fill="none" stroke="#d2d2d2" stroke-width="1.1"/><path d="M5.6 12.6 C6 13.8 8 13.8 8.4 12.6" fill="none" stroke="#d2d2d2" stroke-width="1.1"/></svg>
<div class="r" style="left:1821px;top:1026px;width:10.6px;height:10.6px;background:#f1707b;border-radius:50%;"></div>
<span class="t" style="left:1824px;top:1026.8px;font-size:9.4px;line-height:11px;color:#2a1010;font-weight:700;">3</span>
<svg class="r" style="left:1853.6px;top:1020.6px;" width="14" height="16" viewBox="0 0 14 16"><path d="M4.6 7 H1.6 L0.8 12.4 H2.6 L1.6 15 L5 12.4 H9.6 L10.6 7.6" fill="none" stroke="#c8c8c8" stroke-width="1"/><path d="M8 0.6 L10.4 1 L9 7.4 L6.6 7 Z" fill="#f5cf1a"/><path d="M6.2 8.6 L8.6 9 L8.2 11 L5.8 10.6 Z" fill="#f5cf1a"/></svg>
<svg class="r" style="left:1877.4px;top:1021.4px;" width="15" height="14.6" viewBox="0 0 15 14.6"><path d="M0.4 1 H14.6 L7.5 14 Z" fill="#39b54a"/><path d="M4.6 4.6 L7 7.6 L10.8 2.8" fill="none" stroke="#ffffff" stroke-width="1.6"/></svg>
<div class="r" style="left:1899px;top:1021.2px;width:15.2px;height:15.2px;border:1.3px solid #d2d2d2;border-radius:50%;"></div>
<div class="r" style="left:0px;top:1040.4px;width:1920px;height:39.6px;background:#1c1c1c;"></div>
<svg class="r" style="left:15.6px;top:1051.2px;" width="17" height="17" viewBox="0 0 17 17"><path d="M0 2.4 L7 1.4 V8 H0 Z M8 1.3 L17 0 V8 H8 Z M0 9 H7 V15.6 L0 14.6 Z M8 9 H17 V17 L8 15.7 Z" fill="#ffffff"/></svg>
<div class="r" style="left:48px;top:1040.4px;width:288px;height:39.6px;background:#303030;border:1px solid #505050;"></div>
<svg class="r" style="left:60px;top:1051px;" width="17" height="17" viewBox="0 0 17 17"><circle cx="10.2" cy="6.6" r="5.4" fill="none" stroke="#ffffff" stroke-width="1.3"/><path d="M6.4 10.6 L0.8 16.2" stroke="#ffffff" stroke-width="1.4"/></svg>
<span class="t" style="left:88.2px;top:1050.6px;font-size:15px;line-height:21px;color:#e0e0e0;letter-spacing:-0.279px;">Escriu aquí per cercar</span>
<svg class="r" style="left:257px;top:1040.4px;overflow:hidden;" width="79" height="39.6" viewBox="0 0 79 39.6"><g transform="translate(-257,-1040.4)"><polygon points="257.4,1080 269.6,1065.2 332.6,1065.2 336,1071 336,1080" fill="#efcf9f"/><polygon points="257.4,1080 260,1076.8 336,1076.8 336,1080" fill="#c9a273"/><g transform="rotate(-17 282 1062)"><path d="M270 1056 L282 1053.4 L294 1056 V1072 L282 1069.6 L270 1072 Z" fill="#3f9a4b"/><path d="M271 1054.4 C275 1052.4 279 1052.6 282 1054.4 C285 1052.6 289 1052.4 293 1054.4 V1069.6 C289 1067.8 285 1068 282 1069.6 C279 1068 275 1067.8 271 1069.6 Z" fill="#f3f0f8"/><path d="M282 1054.4 V1069.6" stroke="#b9b4c8" stroke-width="0.8"/><path d="M273 1057.4 H280 M273 1060 H280 M273 1062.6 H280 M273 1065.2 H280 M284 1057.4 H291 M284 1060 H291 M284 1062.6 H291" stroke="#c4c0d0" stroke-width="0.7"/></g><g transform="rotate(-48 287.6 1059.6)"><rect x="289.6" y="1058" width="11" height="3.4" fill="#f5a623"/><polygon points="289.6,1058 289.6,1061.4 286.6,1059.7" fill="#f3d9b1"/><rect x="300.6" y="1058" width="1" height="3.4" fill="#d8d8d8"/><rect x="301.6" y="1058" width="2.6" height="3.4" rx="0.8" fill="#f0625a"/></g><path d="M311.6 1049.6 C311.6 1041.6 319.8 1041.6 319.8 1049.6" fill="none" stroke="#1f6fe0" stroke-width="1.8"/><path d="M306 1056 C306 1044.4 325.4 1044.4 325.4 1056 V1070 C325.4 1072.6 323.6 1073.6 321.4 1073.6 H310 C307.8 1073.6 306 1072.6 306 1070 Z" fill="#1a7af0"/><path d="M307.4 1055 C308.4 1047.6 313 1046.2 315.7 1046.2" fill="none" stroke="#7fb8ff" stroke-width="0.8"/><path d="M308.4 1066.4 C308.4 1057.6 323 1057.6 323 1066.4 V1069.6 C323 1071.4 321.8 1072.2 320.4 1072.2 H311 C309.6 1072.2 308.4 1071.4 308.4 1069.6 Z" fill="#2f8cff"/><path d="M308.6 1068.6 C312 1070.6 319.4 1070.6 322.8 1068.6 V1069.6 C322.8 1071.4 321.8 1072.2 320.4 1072.2 H311 C309.6 1072.2 308.6 1071.4 308.6 1069.6 Z" fill="#b58cf5"/><rect x="308.6" y="1063" width="1.4" height="3.4" rx="0.7" fill="#cfe3ff"/></g></svg>
<svg class="r" style="left:351.6px;top:1051.6px;" width="16.6" height="15.8" viewBox="0 0 16.6 15.8"><path d="M0.6 2 V0.6 H10.8 V2 M0.6 13.8 V15.2 H10.8 V13.8" fill="none" stroke="#ffffff" stroke-width="1.2"/><rect x="0.6" y="4.3" width="10.2" height="7.2" fill="none" stroke="#ffffff" stroke-width="1.2"/><path d="M14.8 0 V2.8 M14.8 9 V15.8" stroke="#ffffff" stroke-width="1.4"/><rect x="13.4" y="4.2" width="2.9" height="3.2" fill="#ffffff"/></svg>
<div class="r" style="left:399px;top:1047.9px;width:24.1px;height:24.1px;background:#f37b25;border-radius:3px;"></div>
<svg class="r" style="left:399px;top:1047.9px;" width="24.1" height="24.1" viewBox="0 0 24.1 24.1"><g fill="#ffffff"><circle cx="7.6" cy="8.2" r="4.2"/><circle cx="16.8" cy="8.2" r="4.2"/><circle cx="7.6" cy="15.2" r="4.2"/><circle cx="16.8" cy="15.2" r="4.2"/><rect x="6" y="6" width="12" height="11.6"/></g><g fill="#f37b25"><circle cx="8.2" cy="11.7" r="2.1"/><circle cx="16.2" cy="11.7" r="2.1"/><rect x="8.2" y="10.8" width="8" height="1.8"/><polygon points="12.2,3.6 10.6,5.4 13.8,5.4"/><polygon points="12.2,19.8 10.6,18 13.8,18"/></g></svg>
<svg class="r" style="left:449px;top:1050.6px;" width="22" height="18.6" viewBox="0 0 22 18.6"><path d="M0.4 1.6 C0.4 0.8 0.9 0.3 1.7 0.3 H7.6 L9.4 2.4 H20.4 C21.2 2.4 21.6 2.9 21.6 3.6 V14 H0.4 Z" fill="#e6a51c"/><path d="M0.4 4.4 H21.6 V14.6 C21.6 15.4 21.1 15.8 20.4 15.8 H1.6 C0.9 15.8 0.4 15.4 0.4 14.6 Z" fill="#fcd566"/><path d="M4 10.2 H18 V18.2 H4 Z" fill="#2f8de6"/><path d="M4 10.2 H18 V12 H4 Z" fill="#55a8f0"/><path d="M8.4 14.2 H13.6 V18.2 H8.4 Z" fill="#f8c94a"/></svg>
<div class="r" style="left:440.2px;top:1078px;width:33.4px;height:2px;background:#76b9ed;"></div>
<div class="r" style="left:474.2px;top:1078px;width:5.8px;height:2px;background:#5a8fb8;"></div>
<svg class="r" style="left:496.7px;top:1047.6px;" width="24.4" height="24.4" viewBox="0 0 24.4 24.4"><path d="M12.2 12.2 L1.63 6.10 A12.2 12.2 0 0 1 22.77 6.10 Z" fill="#e33b2e"/><path d="M12.2 12.2 L22.77 6.10 A12.2 12.2 0 0 1 12.20 24.40 Z" fill="#fdd23c"/><path d="M12.2 12.2 L12.20 24.40 A12.2 12.2 0 0 1 1.63 6.10 Z" fill="#2ba24c"/><path d="M7.34 9.39 L22.55 6.22 L18.18 1.85 L9.15 6.92 Z" fill="#e33b2e"/><circle cx="12.2" cy="12.2" r="5.734" fill="#ffffff"/><circle cx="12.2" cy="12.2" r="4.514" fill="#3b7ee8"/></svg>
<svg class="r" style="left:545.8px;top:1047.6px;" width="24.4" height="24.4" viewBox="0 0 24.4 24.4"><path d="M12.2 12.2 L1.63 6.10 A12.2 12.2 0 0 1 22.77 6.10 Z" fill="#e33b2e"/><path d="M12.2 12.2 L22.77 6.10 A12.2 12.2 0 0 1 12.20 24.40 Z" fill="#fdd23c"/><path d="M12.2 12.2 L12.20 24.40 A12.2 12.2 0 0 1 1.63 6.10 Z" fill="#2ba24c"/><path d="M7.34 9.39 L22.55 6.22 L18.18 1.85 L9.15 6.92 Z" fill="#e33b2e"/><circle cx="12.2" cy="12.2" r="5.734" fill="#ffffff"/><circle cx="12.2" cy="12.2" r="4.514" fill="#3b7ee8"/></svg>
<svg class="r" style="left:556px;top:1058px;" width="17" height="17" viewBox="0 0 17 17"><ellipse cx="8.2" cy="10.4" rx="5" ry="5.4" fill="#d9b9a4"/><path d="M0.6 10 C-0.6 2 6 -0.4 10 1 C15.4 1 17.4 6 16 12 C15 8.4 12.4 6.6 8.6 7 C5.6 7 3 8 0.6 10 Z" fill="#120e0c"/><path d="M9.6 12.6 C11.6 14.6 14 15.4 16.6 13.6 L14 17 H8 Z" fill="#1c1715"/><path d="M4.6 15 C6 16.6 9 16.6 10.6 15 L9 17 H6 Z" fill="#3a2c26"/></svg>
<div class="r" style="left:538px;top:1078px;width:39.6px;height:2px;background:#76b9ed;"></div>
<div class="r" style="left:582.8px;top:1040.4px;width:48.2px;height:39.6px;background:#3e3e3e;"></div>
<svg class="r" style="left:595.4px;top:1048px;" width="24" height="24" viewBox="0 0 24 24"><path d="M17.4 0.6 L23.4 3.4 V20.6 L17.4 23.4 L7 14 L2.6 17.4 L0.6 16.4 V7.6 L2.6 6.6 L7 10 Z M17.2 7 L11 12 L17.2 17 Z M2.8 9.6 V14.4 L5.4 12 Z" fill="#a174e6" fill-rule="evenodd"/><path d="M17.4 0.6 L23.4 3.4 V20.6 L17.4 23.4 Z" fill="#c9a4f8"/></svg>
<div class="r" style="left:582.8px;top:1078px;width:48.2px;height:2px;background:#76b9ed;"></div>
<div class="r" style="left:645px;top:1048.2px;width:22.4px;height:21.8px;background:#0b1a4e;border:1.6px solid #7fb2f5;"></div>
<span class="t" style="left:649.4px;top:1053.1px;font-size:12.4px;line-height:14px;color:#8fc0ff;font-weight:700;letter-spacing:-0.978px;">Ps</span>
<div class="r" style="left:636.4px;top:1078px;width:39.6px;height:2px;background:#76b9ed;"></div>
<svg class="r" style="left:1510.6px;top:1047px;" width="24" height="24" viewBox="0 0 24 24"><defs><linearGradient id="sun" x1="0.2" y1="0" x2="0.7" y2="1"><stop offset="0" stop-color="#f6c021"/><stop offset="0.55" stop-color="#f58a1c"/><stop offset="1" stop-color="#f0641a"/></linearGradient></defs><circle cx="10.4" cy="13" r="10" fill="url(#sun)"/><circle cx="16.4" cy="6.3" r="5.6" fill="#d9302c"/></svg>
<span class="t" style="left:1524.8px;top:1048.5px;font-size:9px;line-height:10px;color:#ffffff;">1</span>
<span class="t" style="left:1541.3px;top:1049.4px;font-size:15px;line-height:21px;color:#ffffff;letter-spacing:-1.129px;">21°C</span>
<span class="t" style="left:1579.4px;top:1049.4px;font-size:15px;line-height:21px;color:#ffffff;letter-spacing:-0.723px;">Soleado</span>
<svg class="r" style="left:1653px;top:1056px;" width="12.4" height="7" viewBox="0 0 12.4 7"><path d="M0.6 6.6 L6.2 0.8 L11.8 6.6" fill="none" stroke="#ffffff" stroke-width="1.2"/></svg>
<svg class="r" style="left:1674.6px;top:1052.6px;" width="16.4" height="13" viewBox="0 0 16.4 13"><rect x="3.6" y="3.4" width="11" height="7.4" fill="none" stroke="#ffffff" stroke-width="1.1"/><rect x="14.9" y="5.6" width="1.3" height="3" fill="#ffffff"/><rect x="5" y="4.8" width="4.6" height="4.6" fill="#ffffff"/><path d="M1.4 0.2 V2.4 M3.4 0.2 V2.4" stroke="#ffffff" stroke-width="0.9"/><path d="M0.6 2.6 H4.2 V4.6 C4.2 5.6 3.4 6.2 2.4 6.2 C1.4 6.2 0.6 5.6 0.6 4.6 Z" fill="#ffffff"/><path d="M2.4 6 V8.6 H3.6" fill="none" stroke="#ffffff" stroke-width="0.9"/></svg>
<svg class="r" style="left:1698.4px;top:1054px;" width="18" height="11.6" viewBox="0 0 18 11.6"><path d="M4.4 11.2 C-0.6 11.2 -0.4 5 4 5.2 C4.6 0.4 11.6 -0.6 13 4 C18.4 3.6 19 11.2 14 11.2 Z" fill="#d8d8d8"/></svg>
<svg class="r" style="left:1725px;top:1053px;" width="15.6" height="14.4" viewBox="0 0 15.6 14.4"><circle cx="12.6" cy="12.4" r="1.5" fill="#ffffff"/><path d="M7.6 12.6 A5 5 0 0 1 12.8 7.4" fill="none" stroke="#e8e8e8" stroke-width="1.3"/><path d="M4.2 12.6 A8.4 8.4 0 0 1 12.8 4" fill="none" stroke="#9a9a9a" stroke-width="1.2"/><path d="M0.8 12.6 A11.8 11.8 0 0 1 12.8 0.7" fill="none" stroke="#707070" stroke-width="1.2"/></svg>
<svg class="r" style="left:1746.4px;top:1053px;" width="17" height="14" viewBox="0 0 17 14"><path d="M0.6 4.6 H3.6 L7.2 1.2 V12.8 L3.6 9.4 H0.6 Z" fill="none" stroke="#ffffff" stroke-width="1.1"/><path d="M9.6 4.6 C10.8 6 10.8 8 9.6 9.4 M11.8 2.8 C14 5.4 14 8.6 11.8 11.2 M14 1 C17 4.8 17 9.2 14 13" fill="none" stroke="#ffffff" stroke-width="1"/></svg>
<span class="t" style="left:1774px;top:1052px;font-size:12.4px;line-height:17px;color:#ffffff;letter-spacing:-0.858px;">CAT</span>
<span class="t" style="left:1820.8px;top:1042.8px;font-size:12.4px;line-height:17px;color:#ffffff;letter-spacing:-0.479px;">11:29</span>
<span class="t" style="left:1808.6px;top:1061px;font-size:12.4px;line-height:17px;color:#ffffff;letter-spacing:-0.234px;">1/11/2023</span>
<svg class="r" style="left:1879.4px;top:1050.6px;" width="16.6" height="16.6" viewBox="0 0 16.6 16.6"><path d="M0.6 0.6 H16 V12 H7.6 L4.2 15.6 V12 H0.6 Z" fill="#ffffff"/><path d="M3.2 3.8 H13.4 M3.2 6.4 H13.4 M3.2 9 H10" stroke="#1c1c1c" stroke-width="1"/></svg>
<div class="r" style="left:1888.6px;top:1059px;width:14.8px;height:14.8px;background:#1c1c1c;border:1.2px solid #a8a8a8;border-radius:50%;"></div>
<div class="r" style="left:1915px;top:1040.4px;width:1px;height:39.6px;background:#5a5a5a;"></div>
<span class="t" style="left:1893px;top:1061.5px;font-size:10.4px;line-height:12px;color:#ffffff;">4</span>
<svg class="r" style="left:1000px;top:520px;" width="440" height="180" viewBox="0 0 440 180"><path d="M16 11 L112 53" stroke="#ffffff" stroke-width="1.6"/><polygon points="124,58 104,56.5 108.5,46.5" fill="#ffffff"/><path d="M428 167 L318 105" stroke="#ffffff" stroke-width="1.6"/><polygon points="305,98 325,101.5 319.5,111.5" fill="#ffffff"/></svg>
</body></html>
